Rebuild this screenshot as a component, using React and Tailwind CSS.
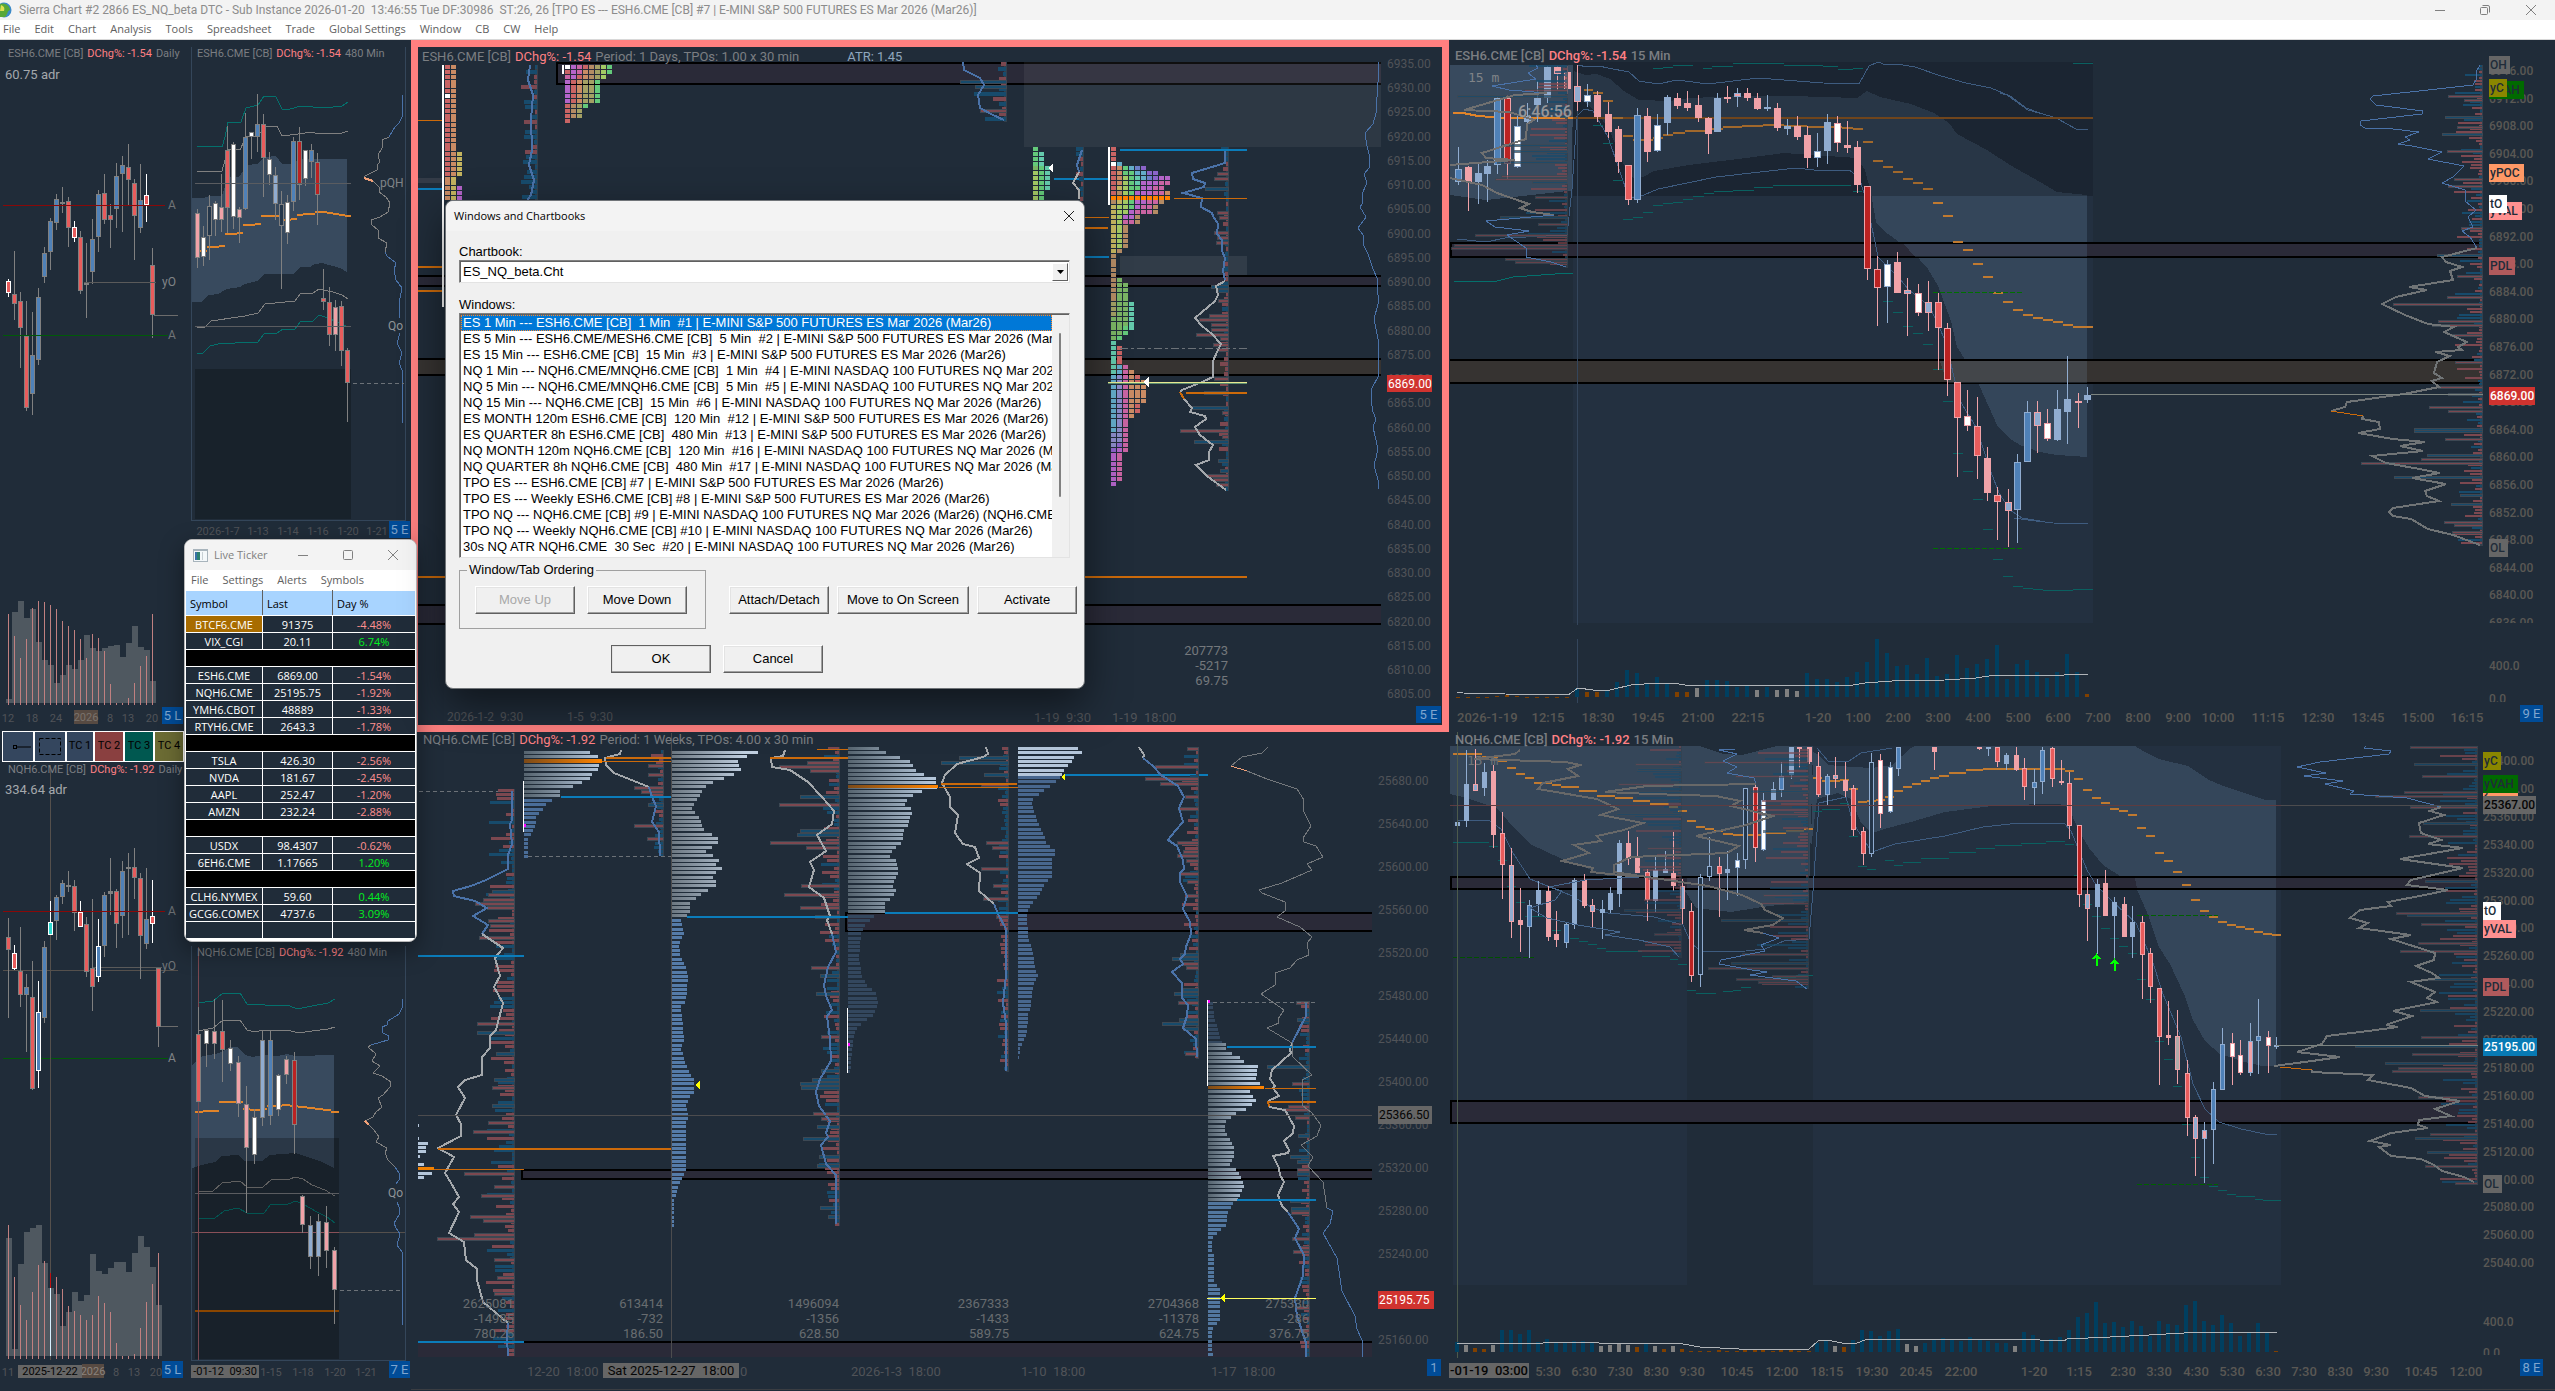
import React, { useState } from "react";

// ---------- helpers ----------

// maps a pane's plot units to screen pixels
const scale = (x0, y0, kx, ky) => (x, y) => [
  Math.round(x0 + x / kx),
  Math.round(y0 + y / ky),
];

const parse = (str) =>
  str
    .trim()
    .split(/\s+/)
    .map((row) => row.split(",").map((v) => (isNaN(v) ? v : Number(v))));

const noise = (i) => {
  const v = Math.sin(i * 12.9898) * 43758.5453;
  return v - Math.floor(v);
};

const GRAY = "#808080";
const DIM = "#505358";
const TEAL = "#04706c";
const BLUE = "#4a72a8";
const LEVEL_BLUE = "#0b7cba";
const ORANGE = "#cc6a0a";

const FILLS = {
  r: "#e85c5c",
  R: "#e85c5c",
  b: "#4f81b8",
  B: "#4f81b8",
  c: "#30d8d0",
  w: "#ffffff",
  y: "#ffffff",
  p: "#f0a2a8",
  z: "#f0a2a8",
  d: "#bb2222",
  l: "#90acd0",
  x: "#90acd0",
  h: "#24364a",
  g: "#808080",
  q: "#b0aaaa",
};

// ---------- chart primitives ----------

function Candles({ s, data, width = 5, paired = false }) {
  const half = (width - 1) / 2;
  return parse(data).map(([x, hi, lo, top, bot, kind], i) => {
    const [cx, yHi] = s(x, hi);
    const yLo = s(x, lo)[1];
    const yTop = s(x, top)[1];
    const yBot = s(x, bot)[1];
    let edge = GRAY;
    if (paired) edge = "rpdxyq".includes(kind) ? "#f0a2a8" : "#90acd0";
    else if ("RBc".includes(kind)) edge = "#ffffff";
    const h = Math.max(yBot - yTop, 2);
    return (
      <g key={i}>
        <rect x={cx} y={yHi} width="1" height={Math.max(yLo - yHi, 1)} fill={edge} />
        <rect x={cx - half} y={yTop} width={width} height={h} fill={edge} />
        {h > 3 && (
          <rect
            x={cx - half + 1}
            y={yTop + 1}
            width={width - 2}
            height={h - 2}
            fill={FILLS[kind]}
          />
        )}
      </g>
    );
  });
}

function Line({ s, pts, color, w = 1 }) {
  const points = parse(pts)
    .map(([x, y]) => s(x, y).join(","))
    .join(" ");
  return <polyline points={points} fill="none" stroke={color} strokeWidth={w} />;
}

function Area({ s, pts, fill, opacity = 1 }) {
  const points = parse(pts)
    .map(([x, y]) => s(x, y).join(","))
    .join(" ");
  return <polygon points={points} fill={fill} opacity={opacity} />;
}

function Dashes({ s, data, color, h = 1 }) {
  return parse(data).map(([x0, y, x1], i) => {
    const [a, py] = s(x0, y);
    const b = s(x1, y)[0];
    return <rect key={i} x={a} y={py} width={b - a} height={h} fill={color} />;
  });
}

function Level({ x0, x1, y, color, h = 1 }) {
  return <rect x={x0} y={y} width={x1 - x0} height={h} fill={color} />;
}

function Dotted({ x0, x1, y, color = "#6c7278", dash = "4 3" }) {
  return (
    <line x1={x0} x2={x1} y1={y} y2={y} stroke={color} strokeDasharray={dash} />
  );
}

function Zone({ x0, x1, y0, y1, fill = "#2a2a38", left = false }) {
  return (
    <g>
      <rect x={x0} y={y0} width={x1 - x0} height={y1 - y0} fill={fill} />
      <rect x={x0} y={y0} width={x1 - x0} height="2" fill="#000" />
      <rect x={x0} y={y1 - 2} width={x1 - x0} height="2" fill="#000" />
      {left && <rect x={x0} y={y0} width="2" height={y1 - y0} fill="#000" />}
    </g>
  );
}

// horizontal delta bars growing left from an edge, with named big bars
function DeltaBars({ s, edge, from, to, step = 4, filler = 16, big = "", opacity = 1, seed = 1 }) {
  const [ex, y0] = s(edge, from);
  const y1 = s(edge, to)[1];
  const small = [];
  for (let y = y0, i = 0; y < y1 - 2; y += step, i++) {
    const n = noise(i + seed * 31);
    small.push(
      <rect
        key={y}
        x={ex - 2 - Math.round(n * n * filler)}
        y={y}
        width={2 + Math.round(n * n * filler)}
        height={step - 1}
        fill={noise(i * 3 + seed) > 0.48 ? "#7c4850" : "#174b6c"}
      />
    );
  }
  return (
    <g opacity={opacity}>
      <rect x={ex - 2} y={y0} width="3" height={y1 - y0} fill="#33404c" />
      {small}
      {big &&
        parse(big).map(([y, x, kind], i) => {
          const [bx, by] = s(x, y);
          return (
            <rect
              key={"b" + i}
              x={bx}
              y={by - 1}
              width={ex - bx}
              height={step > 3 ? 3 : 2}
              fill={kind === "b" ? "#174b6c" : "#7c4850"}
              stroke="#3d4853"
              strokeWidth="1"
            />
          );
        })}
    </g>
  );
}

// TPO rows growing right from an edge; widths come from control points
function ProfileRows({ s, edge, pts, from, to, fill }) {
  const ctl = parse(pts);
  const rows = [];
  const py0 = s(0, from)[1];
  const py1 = s(0, to)[1];
  const ctlPx = ctl.map(([y, x]) => [s(x, y)[1], s(x, y)[0]]);
  const ex = s(edge, 0)[0];
  for (let k = 0; ; k++) {
    const y = py0 + Math.round(k * 4.3);
    if (y >= py1) break;
    let j = 0;
    while (j < ctlPx.length - 2 && ctlPx[j + 1][0] < y) j++;
    const [ya, xa] = ctlPx[j];
    const [yb, xb] = ctlPx[j + 1];
    const t = Math.min(1, Math.max(0, (y - ya) / (yb - ya || 1)));
    rows.push(
      <rect
        key={k}
        x={ex}
        y={y - 1}
        width={Math.max(1, Math.round(xa + (xb - xa) * t) - ex)}
        height="3"
        fill={fill}
      />
    );
  }
  return <g>{rows}</g>;
}

function Label({ x, y, children, color = DIM, size = 12, anchor = "start", weight = 400, font = "Roboto, sans-serif" }) {
  return (
    <text
      x={x}
      y={y}
      fill={color}
      fontSize={size}
      textAnchor={anchor}
      fontWeight={weight}
      fontFamily={font}
      dominantBaseline="central"
      className="whitespace-pre"
    >
      {children}
    </text>
  );
}

function Tag({ x, y, w, h = 18, bg, color = "#202c39", children, weight = 500, size = 12, anchor = "start" }) {
  return (
    <g>
      <rect x={x} y={y} width={w} height={h} fill={bg} />
      <Label
        x={anchor === "middle" ? x + w / 2 : x + 1}
        y={y + h / 2}
        color={color}
        weight={weight}
        size={size}
        anchor={anchor}
      >
        {children}
      </Label>
    </g>
  );
}

function Corner({ x, y, w = 21, children }) {
  return (
    <Tag x={x} y={y} w={w} h={17} bg="#004c98" color="#7fa6cf" weight={400} size={13} anchor="middle">
      {children}
    </Tag>
  );
}

function Chart({ box, children, label }) {
  return (
    <svg
      viewBox={box}
      preserveAspectRatio="none"
      shapeRendering="crispEdges"
      className="block h-full w-full"
      role="img"
      aria-label={label}
    >
      {children}
    </svg>
  );
}

function ChartTitle({ symbol, change, rest, children, className }) {
  return (
    <h2
      className={
        "absolute flex gap-1 whitespace-pre font-['Roboto',sans-serif] leading-3 text-[#7b7e82] " +
        className
      }
    >
      <span>{symbol} [CB]</span>
      <span className="text-[#ff8084]">DChg%: {change}</span>
      <span>{rest}</span>
      {children}
    </h2>
  );
}

// ---------- left column ----------

const ES_DAILY = `25,717,770,724,760,R 43,633,840,763,791,r 61,756,984,784,865,r 79,783,1112,887,1105,r
97,816,1124,946,1063,b 115,744,974,772,961,b 133,621,728,640,712,b 151,534,690,544,637,b
169,462,570,478,550,b 187,441,518,486,491,g 205,471,620,484,563,r 223,543,606,560,595,R
241,573,761,592,754,r 259,609,834,729,731,g 277,537,731,598,697,b 295,450,635,463,592,b
313,402,551,460,539,r 331,492,624,526,541,r 349,369,563,409,508,b 367,348,575,374,403,b
385,312,495,382,421,r 403,417,660,430,529,r 421,372,578,481,563,b 439,402,546,466,496,R
457,624,893,676,826,r`;

const ES_480 = `592,507,684,520,655,p 610,558,678,592,652,w 628,465,660,499,589,h 646,483,587,490,541,w
664,402,575,502,541,p 682,258,579,331,505,r 700,306,567,313,531,w 718,501,609,508,535,p
736,219,510,292,508,b 754,276,357,277,292,w 772,162,336,253,292,b 790,222,470,253,355,r
808,336,434,358,406,w 826,380,540,406,493,l 844,453,746,493,559,h 862,466,612,487,580,w
880,290,513,304,487,b 898,261,480,304,436,d 916,330,437,331,418,w 934,312,414,331,367,b
952,339,555,367,466,d 970,687,810,775,787,r 988,741,918,787,886,r 1006,780,933,802,886,p
1024,783,978,799,934,r 1042,924,1146,931,1030,r`;

const NQ_DAILY = `25,-36,264,21,59,r 43,45,120,68,118,R 61,-9,231,122,196,r 79,132,366,172,196,b
97,93,480,202,476,r 115,153,474,247,422,B 133,33,279,52,264,b 151,-87,15,-23,14,c
169,-105,30,-99,-28,b 187,-150,-78,-141,-99,b 205,-177,-114,-134,-130,g 223,-150,3,-132,-52,r
241,-87,-9,-53,-10,R 259,-39,140,-18,125,r 277,-93,243,114,170,r 295,-33,156,48,142,B
313,-114,80,-105,47,b 331,-216,-45,-117,-109,g 349,-123,54,-116,-18,r 367,-207,24,-177,-42,b
385,-231,15,-189,-186,g 403,-246,-93,-189,-157,r 421,-171,147,-156,17,r 439,-186,57,-33,41,b
457,-150,39,-42,-18,R 475,114,351,115,290,r`;

const NQ_480 = `595,232,516,313,516,r 619,298,411,300,341,w 643,207,387,304,341,p 667,210,457,304,359,r
691,330,423,355,401,w 715,378,561,397,521,p 739,468,849,523,653,p 763,537,702,562,674,w
787,302,588,331,563,l 811,301,585,331,557,b 835,432,558,436,541,w 859,378,462,388,436,p
883,366,672,391,584,d 907,795,908,798,886,p 931,858,1017,886,982,l 955,852,1038,874,982,l
979,828,1014,877,964,p 1003,951,1182,961,1081,p`;

const ES_VOL = [507, 246, 213, 264, 237, 336, 390, 405, 459, 435, 405, 416, 390, 315, 354, 363, 354, 348, 345, 381, 339, 288, 350, 360, 453];
const ES_VOL_PREV = [252, 318, 384, 327, 234, 213, 216, 225, 237, 273, 288, 300, 327, 384, 312, 324, 363, 462, 519, 519, 504, 459, 408, 378, 252];
const NQ_VOL = [924, 1257, 1002, 906, 894, 885, 999, 1074, 1092, 1188, 1146, 1086, 1113, 1095, 972, 1023, 1032, 1014, 996, 996, 1026, 969, 918, 951, 1011, 1125];
const NQ_VOL_PREV = [885, 1041, 1125, 1170, 1086, 1005, 993, 1074, 1041, 1077, 1128, 1143, 1155, 1170, 1155, 1098, 1119, 1146, 1239, 1278, 1278, 1272, 1194, 1116, 1062, 969];

function DailyVolume({ y0, tops, lines, base, lineBase }) {
  return (
    <g>
      {tops.map((t, i) => (
        <rect key={i} x={6 + i * 6} y={Math.round(y0 + t / 3)} width="6" height={Math.round((base - t) / 3)} fill="#4f5860" />
      ))}
      {lines.map((t, i) => (
        <rect key={"l" + i} x={8 + i * 6} y={Math.round(y0 + t / 3)} width="1" height={Math.round((lineBase - t) / 3)} fill="#c08080" />
      ))}
    </g>
  );
}

function EsDaily() {
  const s = scale(0, 40, 3, 3);
  return (
    <section className="relative min-h-0 min-w-0">
      <Chart box="0 40 191 691" label="ES daily">
        <Candles s={s} data={ES_DAILY} />
        <Level x0={3} x1={165} y={205} color="#8a0808" />
        <Level x0={3} x1={168} y={335} color="#005a08" />
        <Level x0={84} x1={156} y={282} color="#5a5a5a" />
        <Level x0={154} x1={178} y={315} color="#6c6c6c" />
        <Label x={168} y={205} color="#707478">A</Label>
        <Label x={168} y={335} color="#707478">A</Label>
        <Label x={162} y={282} color="#808488">yO</Label>
        <DailyVolume y0={530} tops={ES_VOL} lines={ES_VOL_PREV} base={519} lineBase={524} />
        {[["12", 8], ["18", 32], ["24", 56], ["8", 110], ["13", 128], ["20", 152]].map(([t, x]) => (
          <Label key={t} x={x} y={718} anchor="middle" size={11}>{t}</Label>
        ))}
        <Tag x={74} y={710} w={24} h={14} bg="#574a42" color="#7a726c" weight={400} size={11} anchor="middle">2026</Tag>
        <Corner x={162} y={707}>5 L</Corner>
        <Label x={5} y={74} color="#a4a8ac" size={13}>60.75 adr</Label>
      </Chart>
      <ChartTitle symbol="ESH6.CME" change="-1.54" rest="Daily" className="left-2 top-2 text-[11px]" />
    </section>
  );
}

function Es480() {
  const s = scale(0, 40, 3, 3);
  return (
    <section className="relative min-h-0 min-w-0">
      <Chart box="191 40 220 691" label="ES 480 minute">
        <path d="M191.5 47V520.5H405.5V47" fill="none" stroke="#34465a" />
        <Area s={s} fill="#384a5e" pts="576,473 610,473 630,467 665,467 680,420 690,411 716,411 735,385 745,375 770,371 795,350 828,348 845,371 875,371 900,357 1041,357 1041,695 1020,684 965,670 945,672 930,680 900,681 880,702 795,703 770,723 735,731 720,742 680,748 655,763 627,765 603,785 576,785" />
        <rect x="195" y="369" width="156" height="150" fill="#18222b" />
        <Line s={s} color={TEAL} pts="592,319 665,322 675,290 685,246 722,246 738,203 775,195 793,169 828,170 847,208 870,208 903,198 975,203 1025,198 1043,187" />
        <Line s={s} color={GRAY} pts="592,397 665,394 675,360 688,328 720,331 738,290 775,287 795,259 830,259 847,289 895,283 940,277 950,281 1025,279 1043,274" />
        <Line s={s} color={GRAY} pts="592,865 615,860 632,842 735,827 775,818 795,793 885,782 900,763 940,760 958,748 1000,757 1025,765 1043,778" />
        <Line s={s} color={TEAL} pts="592,943 610,938 630,917 665,910 690,913 720,907 775,907 793,883 830,878 850,868 885,868 900,845 940,842 958,824 985,835 1010,845 1043,862" />
        <Dashes s={s} h={2} color="#e0842a" data="598,630,621 621,618,657 657,615,675 675,579,711 711,575,729 729,553,747 747,551,765 765,548,783 783,524,837 846,537,873 873,534,891 891,521,909 909,518,945 945,513,981 981,515,999 999,518,1017 1017,521,1035 1035,524,1053" />
        <Candles s={s} data={ES_480} />
        <Level x0={195} x1={351} y={183} color="#5a5c60" />
        <Level x0={195} x1={351} y={326} color="#5a5c60" />
        <Line s={s} color={BLUE} pts="1205,165 1205,230 1197,250 1185,260 1168,290" />
        <Line s={s} color={GRAY} pts="1168,290 1145,300 1147,325 1135,345 1140,365 1130,375 1132,390 1095,408 1092,413" />
        <Line s={s} color="#f0a078" w={2} pts="1092,413 1118,424" />
        <Line s={s} color={GRAY} pts="1118,424 1140,445 1138,455 1158,470 1170,490 1165,515 1140,530 1112,540 1117,555 1135,570 1133,595 1160,608 1155,635" />
        <Line s={s} color={BLUE} pts="1155,635 1160,648 1188,670 1183,690 1187,720 1205,745 1198,790 1200,835" />
        <Line s={s} color={BLUE} pts="1200,880 1190,910 1205,940 1197,970 1205,990 1205,1150" />
        <Dotted x0={353} x1={404} y={383.5} />
        <Label x={380} y={183} color="#808488">pQH</Label>
        <Label x={388} y={326} color="#909498">Qo</Label>
        {[["2026-1-7", 218], ["1-13", 258], ["1-14", 288], ["1-16", 318], ["1-20", 348], ["1-21", 377]].map(([t, x]) => (
          <Label key={t} x={x} y={531} anchor="middle" size={11}>{t}</Label>
        ))}
        <Corner x={389} y={521}>5 E</Corner>
      </Chart>
      <ChartTitle symbol="ESH6.CME" change="-1.54" rest="480 Min" className="left-1.5 top-2 text-[11px]" />
    </section>
  );
}

function NqDaily() {
  const s = scale(0, 930, 3, 3);
  return (
    <section className="relative min-h-0 min-w-0">
      <Chart box="0 762 191 629" label="NQ daily">
        <Level x0={3} x1={178} y={970} color="#55504c" />
        <Level x0={92} x1={162} y={967} color="#5a5a5a" />
        <Level x0={3} x1={168} y={1058} color="#005a08" />
        <Level x0={160} x1={178} y={1026} color="#6c6c6c" />
        <DailyVolume y0={930} tops={NQ_VOL} lines={NQ_VOL_PREV} base={1277} lineBase={1287} />
        <rect x="50" y="765" width="1" height="595" fill="#55504c" />
        <rect x="50" y="1273" width="1" height="15" fill="#c01010" />
        <rect x="50" y="1288" width="1" height="68" fill="#d8f0ff" />
        <Candles s={s} data={NQ_DAILY} />
        <Level x0={3} x1={165} y={911} color="#8a0808" />
        <Label x={168} y={911} color="#707478">A</Label>
        <Label x={168} y={1058} color="#808488">A</Label>
        <Label x={162} y={966} color="#707478">yO</Label>
        <Label x={8} y={1372} anchor="middle" size={11}>11</Label>
        <Label x={116} y={1372} anchor="middle" size={11}>8</Label>
        <Label x={134} y={1372} anchor="middle" size={11}>13</Label>
        <Label x={156} y={1372} anchor="middle" size={11}>20</Label>
        <Tag x={82} y={1364} w={22} h={14} bg="#574a42" color="#8a827c" weight={400} size={11} anchor="middle">2026</Tag>
        <Tag x={18} y={1365} w={64} h={13} bg="#666666" color="#050505" weight={400} size={11} anchor="middle">2025-12-22</Tag>
        <Corner x={162} y={1361}>5 L</Corner>
        <Label x={5} y={789} color="#a4a8ac" size={13}>334.64 adr</Label>
      </Chart>
      <ChartTitle symbol="NQH6.CME" change="-1.92" rest="Daily" className="left-2 top-0.5 text-[11px]" />
    </section>
  );
}

function Nq480() {
  const s = scale(0, 930, 3, 3);
  return (
    <section className="relative min-h-0 min-w-0">
      <Chart box="191 762 220 629" label="NQ 480 minute">
        <path d="M191.5 946V1360.5H405.5V946" fill="none" stroke="#34465a" />
        <Area s={s} fill="#384a5e" pts="576,405 590,390 610,379 645,373 665,365 690,352 715,352 735,375 760,381 790,376 830,377 860,372 885,377 1002,375 1002,714 965,697 920,680 885,669 810,676 785,693 735,693 715,674 665,679 645,697 605,704 576,714" />
        <Line s={s} color={TEAL} pts="595,220 640,213 670,190 720,190 740,222 795,226 870,228 890,236 935,228 985,218 1004,208" />
        <Line s={s} color={GRAY} pts="595,303 640,295 670,271 720,271 742,300 765,305 790,301 860,299 885,307 915,307 960,299 985,297 1004,292" />
        <Line s={s} color={GRAY} pts="595,786 640,783 665,760 720,753 742,772 790,770 815,748 870,748 885,742 910,748 935,765 975,780 1004,797" />
        <Line s={s} color={TEAL} pts="595,865 645,865 672,843 715,835 740,850 792,850 812,823 865,823 888,814 910,823 950,845 980,862 1004,880" />
        <rect x="195" y="1138" width="144" height="221" fill="#000" opacity="0.25" />
        <Dashes s={s} h={2} color="#e0842a" data="585,543,609 609,540,657 657,512,729 729,534,750 750,537,780 780,533,800 800,524,845 845,521,870 870,524,895 895,527,920 920,530,945 945,534,970 970,538,993 993,543,1017" />
        <Level x0={195} x1={339} y={1310} color="#8a4600" h={2} />
        <Level x0={195} x1={339} y={1193} color="#5a5c60" />
        <Level x0={192} x1={405} y={1232} color="#55504c" />
        <Level x0={195} x1={339} y={1232} color="#8a5058" />
        <rect x="198" y="947" width="1" height="413" fill="#7a4850" />
        <Candles s={s} data={NQ_480} />
        <Line s={s} color={BLUE} pts="1205,207 1205,235 1197,252 1165,272 1160,285 1145,290 1150,308 1168,318 1165,330 1112,345" />
        <Line s={s} color={GRAY} pts="1112,345 1105,352 1127,372 1117,392 1140,408 1120,428 1145,438 1172,455 1170,472 1150,495 1133,503 1145,530 1127,545 1120,560 1095,573" />
        <Line s={s} color="#f0a078" w={2} pts="1095,573 1106,584" />
        <Line s={s} color={GRAY} pts="1106,584 1122,600 1138,620 1128,636 1160,655 1155,668 1163,690 1185,710" />
        <Line s={s} color={BLUE} pts="1185,710 1198,730 1197,750 1187,763" />
        <Line s={s} color={BLUE} pts="1192,815 1198,830 1198,855 1182,880 1187,895 1200,912 1190,945 1205,965 1205,1185" />
        <Dotted x0={340} x1={403} y={1290.5} />
        <Label x={388} y={1193} color="#909498">Qo</Label>
        {[["1-15", 271], ["1-18", 303], ["1-20", 335], ["1-21", 366]].map(([t, x]) => (
          <Label key={t} x={x} y={1372} anchor="middle" size={11}>{t}</Label>
        ))}
        <Tag x={191} y={1365} w={68} h={13} bg="#666666" color="#050505" weight={400} size={11} anchor="middle">-01-12  09:30</Tag>
        <Corner x={389} y={1361}>7 E</Corner>
      </Chart>
      <ChartTitle symbol="NQH6.CME" change="-1.92" rest="480 Min" className="left-1.5 top-[185px] text-[11px]" />
    </section>
  );
}

function ToolBar() {
  const base = "h-full shrink-0 border border-white font-['Roboto',sans-serif] text-[11px] text-black ";
  return (
    <nav className="flex h-[31px] shrink-0 overflow-hidden pl-[2px]" aria-label="Chart tools">
      <button className={base + "flex w-8 items-center justify-center bg-[#34465e]"} aria-label="Ray">
        <svg width="18" height="6" viewBox="0 0 18 6" className="ml-2" fill="none" stroke="#000">
          <rect x="0.5" y="1.5" width="3" height="3" />
          <path d="M4 3H18" />
        </svg>
      </button>
      <button className={base + "flex w-8 items-center justify-center bg-[#34465e]"} aria-label="Rectangle">
        <svg width="22" height="17" viewBox="0 0 22 17" fill="none" stroke="#000">
          <rect x="0.5" y="0.5" width="21" height="16" strokeDasharray="4 2" />
        </svg>
      </button>
      <button className={base + "w-7 bg-[#34465e]"}>TC 1</button>
      <button className={base + "w-[30px] bg-[#8a4040]"}>TC 2</button>
      <button className={base + "w-[30px] bg-[#005850]"}>TC 3</button>
      <button className={base + "w-[30px] bg-[#6c6c34]"}>TC 4</button>
    </nav>
  );
}

// ---------- centre column ----------

const TPO_COLORS = {
  R: "#c96464",
  O: "#c98b64",
  Y: "#c3b45f",
  L: "#a3c964",
  G: "#64c97a",
  T: "#64c9ac",
  B: "#64acc9",
  I: "#6c7ec9",
  J: "#8b8bc9",
  V: "#8b64c9",
  M: "#b464c9",
  P: "#c964a3",
  W: "#ffffff",
  K: "#ff8000",
  N: "#b48b64",
  D: "#7ab464",
  E: "#a3a064",
};

const TODAY_TPO =
  "R R R WB ROGBIV ROGGBBVV ROLGTBIVMM ROLGTMMMPP RYLGGMMPP RNLGMMMPPO KKKKKKKKKK NYLGMMPPN YLLGMPPN YLLMPPPN YLMMN YLPPN YLN YLN YLN YLN YLN YN N N N N N ND NDD NDD NDD NDD EDDT EDDT EDDT DDDT DDDT DDGT DDG DG T TR TR TR TR TBP TBPO BJPOR BJPORO BJPOOO BJPOOO BJPOOO BJPOOO BJPOR BJPOR BJPO BJP BJP BJP JJP JJP JVP VMP MP MP MP MP MP MP M".split(
    " "
  );

function TpoCells({ x, y, rows, step = 4.85 }) {
  return rows.map((row, r) =>
    row.split("").map((c, i) => (
      <rect
        key={r + "-" + i}
        x={x + i * 6}
        y={Math.round(y + r * step)}
        width="5"
        height="4"
        fill={TPO_COLORS[c]}
      />
    ))
  );
}

const repeatRows = (spec) =>
  spec.split(" ").flatMap((part) => {
    const [row, n] = part.split("*");
    return Array(Number(n || 1)).fill(row);
  });

function EsProfile() {
  const s = scale(1000, 40, 3, 2.272);
  const prices = Array.from({ length: 27 }, (_, i) => 6935 - i * 5);
  return (
    <section className="relative min-h-0 border-[7px] border-[#ff8080]">
      <Chart box="418 47 1024 678" label="ES TPO profile">
        <Zone x0={556} x1={1381} y0={62} y1={85} left />
        <rect x="1024" y="62" width="357" height="85" fill="#fff" opacity="0.06" />
        <rect x="1120" y="256" width="127" height="19" fill="#fff" opacity="0.08" />
        <Zone x0={418} x1={1381} y0={275} y1={287} />
        <Zone x0={418} x1={1381} y0={358} y1={376} fill="#363331" />
        <Zone x0={418} x1={1381} y0={604} y1={625} />
        <Level x0={418} x1={1247} y={576} color={ORANGE} h={2} />
        <Level x0={418} x1={442} y={120} color={ORANGE} />
        <Level x0={418} x1={442} y={188} color={LEVEL_BLUE} h={2} />
        <rect x="418" y="178" width="24" height="5" fill="#343c48" />
        <Level x0={418} x1={442} y={266} color={ORANGE} h={2} />
        <Level x0={418} x1={442} y={290} color={ORANGE} h={2} />

        {/* oldest sessions on the left */}
        <rect x="442" y="65" width="2" height="242" fill="#fff" />
        <TpoCells x={445} y={65} rows={repeatRows("RO*6 WO RO*11 ROY*5 OY*2 OYM*3")} />
        <DeltaBars s={(x, y) => [x, y]} edge={537} from={65} to={204} step={5} filler={16} seed={4} />
        <Line s={(x, y) => [x, y]} color={BLUE} w={2} pts="530,65 528,80 533,95 531,120 532,150 529,165 534,180 531,195 526,202" />
        <rect x="562" y="65" width="2" height="9" fill="#fff" />
        <TpoCells x={565} y={65} rows={repeatRows("WMPRNELG RMPONELG PMRONEL MROEEG*5 RNEG RNE*2 R")} step={4.88} />
        <DeltaBars s={(x, y) => [x, y]} edge={1006} from={62} to={122} step={5} filler={40} seed={9} big="81,960,b 86,975,b 110,980,r" />
        <Line s={(x, y) => [x, y]} color={BLUE} w={2} pts="963,62 964,70 980,78 984,85 978,95 980,108 993,115 1004,120" />

        <TpoCells x={1033} y={147} rows={repeatRows("G GT*3 DGT LGT*4 LG*3")} />
        <polygon points="1048,168 1053,163 1053,173" fill="#fff" />
        <Level x0={1054} x1={1108} y={178} color={LEVEL_BLUE} h={2} />
        <DeltaBars s={s} edge={250} from={243} to={365} step={5} filler={6} seed={5} />
        <Line s={s} color={BLUE} w={2} pts="245,250 232,285 238,300" />
        <Line s={s} color="#b0b0b0" w={2} pts="238,300 220,325 238,340 238,362" />
        <Level x0={1054} x1={1109} y={217} color={ORANGE} />
        <Level x0={1054} x1={1108} y={227} color={ORANGE} h={2} />
        <Level x0={1054} x1={1109} y={256} color={LEVEL_BLUE} h={2} />

        {/* current session */}
        <rect x="1108" y="147" width="2" height="58" fill="#fff" />
        <TpoCells x={1111} y={147} rows={TODAY_TPO} />
        <DeltaBars s={s} edge={683} from={243} to={1024} step={5} filler={7} seed={2}
          big="303,650,r 314,643,r 337,615,b 391,652,r 403,656,r 436,643,r 447,650,r 458,648,r 558,632,b 568,655,b 590,655,r 624,628,r 635,597,r 645,634,r 656,632,r 667,587,r 678,660,r 690,640,r 702,655,r 767,643,r 800,613,r 833,573,b 845,665,r 887,541,r 899,665,r 910,583,b 955,655,b 977,661,b 988,622,r 998,640,r 1008,648,r" />
        <Line s={s} color={BLUE} w={2} pts="675,250 675,280 575,303 580,315 615,325 612,335 550,348 605,360 602,380 635,392 640,400 655,418 650,440 665,455 665,480 675,495 668,525 675,545" />
        <Line s={s} color="#a4a8ac" w={2} pts="675,548 648,558 655,580 645,592 585,632 605,650 635,668 662,690 655,705 640,730 638,765 605,778 545,795 541,800" />
        <Line s={s} color={ORANGE} w={2} pts="541,800 552,815" />
        <Line s={s} color="#a4a8ac" w={2} pts="552,815 575,835 570,845 615,855 618,862 585,880 600,898 638,920 628,935 628,955 587,965 620,990 677,1022" />
        <Level x0={1120} x1={1247} y={149} color={LEVEL_BLUE} h={2} />
        <Level x0={1174} x1={1247} y={198} color={ORANGE} />
        <Dotted x0={1120} x1={1247} y={348.5} dash="8 3 3 3" />
        <Level x0={1108} x1={1247} y={382} color="#e8e890" />
        <Level x0={1108} x1={1247} y={383} color="#5f8f70" />
        <Level x0={1186} x1={1247} y={392} color={ORANGE} h={2} />
        <polygon points="1143,382 1149,377 1149,387" fill="#fff" />
        <Line s={s} color={BLUE} pts="1135,50 1135,95 1130,105 1130,130 1127,165 1118,190 1095,212 1100,240 1110,268 1108,290 1092,305 1100,325 1086,350 1090,370 1079,380 1098,403 1075,427 1090,442 1090,463 1105,487 1120,520 1135,545 1130,560 1135,580 1133,600 1122,635 1135,680 1135,765 1115,790 1113,815 1120,845 1128,860 1120,880 1135,930 1128,950 1122,965 1135,1000 1135,1020" />

        {["207773", "-5217", "69.75"].map((t, i) => (
          <Label key={t} x={1228} y={650 + i * 15} anchor="end" color="#74787c" size={13}>{t}</Label>
        ))}
        {prices.map((p, i) => (
          <Label key={p} x={1387} y={Math.round(64 + i * 24.24)}>{p.toFixed(2)}</Label>
        ))}
        <Tag x={1387} y={375} w={45} h={17} bg="#d0332f" color="#ffffff" weight={400}>6869.00</Tag>
        <Label x={447} y={717}>2026-1-2  9:30</Label>
        <Label x={567} y={717}>1-5  9:30</Label>
        <Label x={1034} y={717} size={13}>1-19  9:30</Label>
        <Label x={1112} y={717} size={13}>1-19  18:00</Label>
        <Corner x={1416} y={706} w={25}>5 E</Corner>
      </Chart>
      <ChartTitle symbol="ESH6.CME" change="-1.54" rest="Period: 1 Days, TPOs: 1.00 x 30 min" className="left-1 top-1 text-[13px]">
        <span className="pl-11 text-[#8fa6bd]">ATR: 1.45</span>
      </ChartTitle>
    </section>
  );
}

const SUMS = [
  [514, "2625081", "-14985", "780.25"],
  [663, "613414", "-732", "186.50"],
  [839, "1496094", "-1356", "628.50"],
  [1009, "2367333", "-1433", "589.75"],
  [1199, "2704368", "-11378", "624.75"],
  [1309, "275330", "-286", "376.75"],
];

function NqProfile() {
  const s = scale(410, 690, 2.45, 2.237);
  const t = scale(1040, 690, 3, 2.237);
  const gray = "#a4a8ac";
  return (
    <section className="relative min-h-0">
      <Chart box="411 732 1038 659" label="NQ TPO profile">
        <defs>
          <linearGradient id="fadeA" gradientUnits="userSpaceOnUse" x1="524" x2="600" y1="0" y2="0">
            <stop offset="0" stopColor="#56646f" />
            <stop offset="1" stopColor="#b4c6da" />
          </linearGradient>
          <linearGradient id="fadeB" gradientUnits="userSpaceOnUse" x1="672" x2="745" y1="0" y2="0">
            <stop offset="0" stopColor="#6d7882" />
            <stop offset="1" stopColor="#c0cfe0" />
          </linearGradient>
          <linearGradient id="fadeC" gradientUnits="userSpaceOnUse" x1="848" x2="930" y1="0" y2="0">
            <stop offset="0" stopColor="#56646f" />
            <stop offset="1" stopColor="#b4c6da" />
          </linearGradient>
          <linearGradient id="fadeD" gradientUnits="userSpaceOnUse" x1="1208" x2="1250" y1="0" y2="0">
            <stop offset="0" stopColor="#56646f" />
            <stop offset="1" stopColor="#b4c6da" />
          </linearGradient>
          <linearGradient id="fadePoc" x1="0" x2="1" y1="0" y2="0">
            <stop offset="0" stopColor="#7c4a18" />
            <stop offset="1" stopColor="#ff8400" />
          </linearGradient>
        </defs>
        <Zone x0={845} x1={1372} y0={912} y1={932} left />
        <Zone x0={521} x1={1372} y0={1169} y1={1180} left />
        <rect x="418" y="1341" width="954" height="16" fill="#2a2a38" />
        <Level x0={418} x1={1372} y={1341} color="#000" h={2} />

        {/* first week, cut off by the pane edge */}
        <Dotted x0={419} x1={512} y={791.5} />
        <DeltaBars s={s} edge={256} from={222} to={1490} filler={26} seed={3}
          big="450,200,b 457,190,r 467,178,r 477,160,r 486,188,r 515,190,r 525,195,r 553,170,r 745,165,r 765,163,b 811,210,b 870,205,b 888,200,r 928,200,b 967,190,r 986,155,r 1081,133,r 1110,205,r 1129,175,r 1177,146,r 1186,180,r 1216,158,r 1225,66,r 1273,205,r 1313,213,r 1350,205,r" />
        <Line s={s} color={BLUE} w={2} pts="249,227 249,290 245,300 250,345 240,370 240,400 185,425 150,438 105,450 108,460 160,472 188,487 155,505 190,525 177,545" />
        <Line s={s} color={gray} w={2} pts="177,545 228,578 208,600 220,640 205,665 228,700 210,760 195,775 195,800 177,820 177,862 135,872 118,888 135,912 112,950 125,970 125,997 68,1025 108,1045 85,1080 100,1102 120,1135 105,1150 120,1168 95,1215 132,1235 138,1275 165,1295 163,1320 180,1370 240,1415" />
        <Line s={s} color={BLUE} w={2} pts="240,1415 237,1450 240,1490" />
        <Level x0={418} x1={524} y={955} color={LEVEL_BLUE} h={2} />
        <Level x0={438} x1={671} y={1148} color={ORANGE} h={2} />
        <Level x0={434} x1={524} y={1169} color={ORANGE} />
        <Level x0={418} x1={524} y={1341} color={LEVEL_BLUE} h={2} />
        {[[1124, 1], [1137, 1], [1142, 10], [1146, 8], [1150, 8], [1155, 2], [1163, 6], [1172, 14], [1176, 6]].map(([y, w]) => (
          <rect key={y} x="418" y={y} width={w} height="3" fill="#b4c6da" />
        ))}
        <rect x="418" y="1167" width="16" height="3" fill="#f08000" />

        {/* 12-20 */}
        <ProfileRows s={s} edge={279} from={139} to={240} fill="url(#fadeA)" pts="139,441 149,465 168,462 178,461 187,446 197,441 207,416 216,392 226,367 240,367" />
        <ProfileRows s={s} edge={279} from={245} to={373} fill="#4a6d98" pts="245,348 254,333 264,328 274,318 283,309 293,309 312,304 331,289 375,289" />
        <rect x="524" y="759" width="78" height="4" fill="url(#fadePoc)" />
        <rect x="523" y="781" width="1" height="51" fill="#fff" />
        <rect x="524" y="824" width="2" height="3" fill="#f0f" />
        <DeltaBars s={s} edge={619} from={135} to={373} filler={14} seed={7} big="168,583,r 187,583,r 216,550,r 226,565,r 255,582,b 303,550,r 332,580,r" />
        <Line s={s} color={gray} w={2} pts="517,135 515,143 478,152 480,168 500,185 585,217" />
        <Line s={s} color={BLUE} w={2} pts="585,217 592,240 603,260 592,295 610,318 613,372" />
        <Level x0={606} x1={671} y={757} color={ORANGE} h={2} />
        <Level x0={602} x1={671} y={761} color={ORANGE} />
        <Level x0={561} x1={672} y={796} color={LEVEL_BLUE} h={2} />
        <Dotted x0={528} x1={671} y={856.5} />

        {/* 12-27 */}
        <ProfileRows s={s} edge={642} from={139} to={512} fill="url(#fadeB)" pts="139,852 149,818 158,804 168,805 178,812 187,794 197,769 207,735 216,720 235,711 245,701 264,691 283,709 303,715 312,720 322,740 331,754 341,755 351,740 360,725 379,759 389,750 399,764 408,750 418,742 428,750 437,750 447,730 457,713 466,701 476,687 495,686 505,677" />
        <ProfileRows s={s} edge={642} from={514} to={1200} fill="#557ba8" pts="514,665 543,672 570,660 600,665 620,675 645,680 695,675 705,665 785,672 800,665 850,680 870,695 900,696 909,687 928,677 955,680 965,675 1075,676 1095,665 1115,657 1140,647 1200,647" />
        <polygon points="695,1085 700,1080 700,1090" fill="#ff0" />
        <DeltaBars s={s} edge={1050} from={127} to={1198} filler={18} seed={11}
          big="160,973,r 170,905,r 178,980,r 237,955,b 255,903,r 313,955,b 322,947,b 341,882,r 351,970,r 437,957,r 457,917,r 486,955,r 505,993,r 620,983,r 637,1005,b 677,995,b 773,1008,r 850,1008,b 870,985,b 880,955,b 887,957,b 947,987,r 957,1008,r 975,997,b 1003,962,b 1042,1003,b 1062,997,b 1157,1005,b 1177,1025,b" />
        <Line s={s} color={gray} w={2} pts="918,135 915,148 885,152 888,172 930,180 975,205 1010,240 1038,270 1035,300 997,325 1020,360 980,385 990,402 978,440 1015,465 1028,505 1022,515 1035,545" />
        <Line s={s} color={BLUE} w={2} pts="1035,545 1043,585 1025,620 1015,660 1018,685 1033,715 1022,730 1030,780 1032,830 1005,870 995,900 1002,930 1030,965 1020,990 1023,1000 1007,1018 1020,1060 1043,1085 1043,1195" />
        <Level x0={770} x1={848} y={757} color={ORANGE} h={2} />
        <Level x0={817} x1={848} y={749} color={ORANGE} />
        <Level x0={687} x1={848} y={916} color={LEVEL_BLUE} h={2} />

        {/* 2026-1-3 */}
        <ProfileRows s={s} edge={1073} from={130} to={500} fill="url(#fadeC)" pts="130,1150 139,1165 149,1200 158,1225 178,1240 187,1260 197,1289 216,1290 226,1254 235,1233 245,1217 254,1213 264,1227 274,1229 303,1219 312,1210 341,1205 351,1190 370,1170 379,1190 408,1199 437,1182 447,1190 466,1178 476,1163 500,1163" />
        <ProfileRows s={s} edge={1073} from={505} to={857} fill="#33475e" pts="505,1137 524,1118 543,1105 600,1100 640,1107 658,1117 668,1132 678,1142 698,1147 725,1137 735,1120 755,1095 770,1088 810,1083 857,1078" />
        <rect x="848" y="785" width="90" height="3" fill="url(#fadePoc)" />
        <rect x="847" y="1008" width="1" height="65" fill="#fff" />
        <rect x="848" y="1043" width="2" height="3" fill="#f0f" />
        <DeltaBars s={s} edge={1466} from={127} to={855} filler={10} seed={13}
          big="150,1345,b 160,1300,b 187,1407,b 210,1400,r 341,1410,r 351,1425,r 399,1400,r 437,1428,r 466,1405,r 505,1435,r" />
        <Line s={s} color={gray} w={2} pts="1412,127 1415,143 1405,150 1340,165 1310,190 1303,208 1322,240 1323,262 1343,280 1335,320 1355,345 1385,352 1395,375 1365,390 1397,410 1393,450 1430,478" />
        <Line s={s} color={BLUE} w={2} pts="1430,478 1440,500 1460,535 1460,640 1452,700 1460,745 1460,853" />
        <Level x0={941} x1={1017} y={783} color={ORANGE} h={2} />
        <Level x0={939} x1={1018} y={787} color={ORANGE} />
        <Level x0={885} x1={1018} y={912} color={LEVEL_BLUE} h={2} />

        {/* 1-10 */}
        <ProfileRows s={t} edge={-66} from={130} to={190} fill="url(#fadeC)" pts="130,115 139,126 149,102 158,96 168,84 178,72 190,65" />
        <ProfileRows s={t} edge={-66} from={194} to={826} fill="#48678e" pts="194,60 207,42 216,24 226,5 245,-25 264,-22 303,-4 322,12 341,18 360,48 379,36 418,36 428,18 447,5 466,-12 495,-40 550,-35 580,-25 620,-15 640,-6 660,-20 700,-27 730,-37 765,-38 780,-48 800,-60 826,-62" />
        <polygon points="1061,777 1065,773 1065,781" fill="#ff0" />
        <Level x0={1065} x1={1208} y={774} color={LEVEL_BLUE} h={2} />
        <DeltaBars s={t} edge={475} from={127} to={826} filler={14} seed={17}
          big="130,442,r 170,344,r 197,316,r 207,360,r 237,435,r 265,415,r 341,410,r 360,428,r 370,410,r 380,438,r 409,420,r 428,440,r 458,440,r 590,420,b 600,396,b 610,430,r 620,437,r 668,430,b 677,402,b 697,415,r 735,418,b 744,366,b 755,430,b 812,436,r" />
        <Line s={t} color={gray} w={2} pts="298,128 312,145 308,152" />
        <Line s={t} color={BLUE} w={2} pts="308,152 340,170 362,190 415,215 432,240 418,265 428,295 405,315 385,335 410,350 430,380 432,400 420,410 420,430 440,460 428,490 450,520 452,545 437,575 435,590 420,602 428,612 395,630 425,655 425,690 443,705 440,730 428,755 468,780 470,822" />

        {/* 1-17 */}
        <ProfileRows s={t} edge={504} from={700} to={790} fill="#33475e" pts="700,520 735,522 754,534 773,540 790,546" />
        <ProfileRows s={t} edge={504} from={792} to={1145} fill="url(#fadeD)" pts="792,558 802,558 812,575 821,600 831,612 841,654 870,648 880,660 898,630 917,648 936,625 946,588 965,558 985,555 1005,570 1024,582 1043,582 1062,570 1072,588 1091,606 1110,612 1130,600 1145,588" />
        <ProfileRows s={t} edge={504} from={1148} to={1492} fill="#52779f" pts="1148,580 1168,564 1197,558 1207,540 1226,516 1250,516 1264,521 1322,522 1340,540 1410,540 1430,516 1480,516 1492,522" />
        <rect x="1208" y="1086" width="56" height="3" fill="url(#fadePoc)" />
        <rect x="1207" y="1000" width="1" height="86" fill="#fff" />
        <rect x="1208" y="1000" width="2" height="3" fill="#f0f" />
        <DeltaBars s={t} edge={806} from={695} to={1492} filler={9} seed={19}
          big="697,768,r 735,770,b 841,681,b 880,757,r 930,745,r 937,730,r 956,765,r 995,775,b 1043,750,b 1053,770,b 1072,770,r 1081,770,b 1140,750,b 1158,753,b 1168,753,r 1225,757,r 1245,780,r 1255,760,r 1380,765,r" />
        <Line s={t} color={BLUE} w={2} pts="798,700 798,730 757,790" />
        <Line s={t} color={gray} w={2} pts="757,790 750,805 753,812 697,850 690,870 705,885 700,890 718,908 683,920" />
        <Line s={t} color={ORANGE} w={2} pts="683,920 686,932" />
        <Line s={t} color={gray} w={2} pts="686,932 735,940 762,975 758,990 732,1010 748,1028 745,1035 700,1042 718,1070 720,1085 733,1100 715,1130 725,1155 745,1168" />
        <Line s={t} color={BLUE} w={2} pts="745,1168 777,1205 765,1225 793,1265 790,1310 765,1360 770,1400 798,1460 798,1492" />
        <Dotted x0={1213} x1={1316} y={1002.5} />
        <Level x0={1227} x1={1316} y={1046} color={LEVEL_BLUE} h={2} />
        <Level x0={1265} x1={1316} y={1088} color={ORANGE} />
        <Level x0={1268} x1={1316} y={1101} color={ORANGE} h={2} />
        <Level x0={1237} x1={1316} y={1199} color={LEVEL_BLUE} h={2} />
        <Level x0={1207} x1={1316} y={1298} color="#ffff60" />
        <polygon points="1220,1298 1225,1293 1225,1303" fill="#ff0" />

        {/* composite profile */}
        <Line s={t} color="#74787c" pts="683,127 665,142 605,150 573,170" />
        <Line s={t} color="#f0a078" pts="573,170 620,182" />
        <Line s={t} color="#74787c" pts="620,182 680,200 770,222 793,245 790,268 813,305 790,330 793,340 828,350 850,373 800,390 815,402 725,432 658,448 665,455 735,475 737,492 712,508 780,530 815,552 800,565 808,593 770,605 750,622 705,632 705,660 663,680 733,715 715,735 718,745 680,757 757,790 760,820 815,862 785,872 790,930 812,945 842,972 830,998 782,1018 818,1045 805,1065 848,1100 862,1158" />
        <Line s={t} color={BLUE} pts="862,1158 880,1165 870,1195 848,1215 890,1270 905,1345 945,1400 950,1430 967,1455 965,1492" />

        <rect x="671" y="733" width="1" height="625" fill="#4c4c4e" />
        <Level x0={418} x1={1372} y={1115} color="#4c4c4e" />

        {SUMS.map(([x, ...vals]) =>
          vals.map((v, i) => (
            <Label key={v} x={x} y={1303 + i * 15} anchor="end" color="#686c70" size={13}>{v}</Label>
          ))
        )}
        {[25680, 25640, 25600, 25560, 25520, 25480, 25440, 25400, 25360, 25320, 25280, 25240, 0, 25160].map(
          (p, i) => p > 0 && <Label key={p} x={1378} y={781 + i * 43} size={12}>{p.toFixed(2)}</Label>
        )}
        <Tag x={1378} y={1106} w={54} h={18} bg="#666666" color="#050505" weight={400}>25366.50</Tag>
        <Tag x={1378} y={1291} w={56} h={18} bg="#d0332f" color="#ffffff" weight={400}>25195.75</Tag>
        <Label x={527} y={1371} size={13}>12-20  18:00</Label>
        <Label x={740} y={1371} size={13}>0</Label>
        <Tag x={603} y={1363} w={136} h={15} bg="#666666" color="#050505" weight={400} size={13} anchor="middle">Sat 2025-12-27  18:00</Tag>
        <Label x={851} y={1371} size={13}>2026-1-3  18:00</Label>
        <Label x={1021} y={1371} size={13}>1-10  18:00</Label>
        <Label x={1211} y={1371} size={13}>1-17  18:00</Label>
        <Corner x={1427} y={1359} w={14}>1</Corner>
        <Level x0={411} x1={1449} y={1389} color="#3a3d42" />
      </Chart>
      <ChartTitle symbol="NQH6.CME" change="-1.92" rest="Period: 1 Weeks, TPOs: 4.00 x 30 min" className="left-3 top-0.5 text-[13px]" />
    </section>
  );
}

// ---------- right column ----------

function Volume({ s, data, base }) {
  const colors = { b: "#003f60", o: "#804000", g: "#808080" };
  return parse(data).map(([x, top, kind = "b"], i) => {
    const [cx, y] = s(x, top);
    const yb = s(x, base)[1];
    return <rect key={i} x={cx - 2} y={y} width="4" height={Math.max(yb - y, 1)} fill={colors[kind]} />;
  });
}

const ES15_A = `46,311,391,359,385,b 72,352,448,354,386,p 98,345,432,367,385,l 124,339,428,352,368,l
150,206,369,207,349,b 176,202,379,207,348,d 202,242,356,268,353,w 228,218,262,245,258,l
254,172,258,208,222,l 280,140,218,143,208,l 307,140,190,143,157,p 333,140,200,153,188,p
359,138,236,183,217,x 385,178,226,202,217,w 411,192,258,201,247,p 438,216,292,242,279,p
464,266,366,273,344,p 490,349,434,349,423,r 516,228,431,243,423,b 542,228,343,246,323,p
568,242,322,264,319,w 594,202,286,206,260,l 620,197,230,208,224,p 646,192,236,218,228,p
673,202,258,222,250,p 699,248,327,249,283,p 725,197,280,208,279,l 751,182,218,206,208,p
777,187,226,197,206,z 803,187,214,197,207,p 829,197,233,208,232,p 855,202,236,227,229,l
881,218,278,228,272,p 907,252,286,267,274,l 934,246,296,267,290,p 960,267,357,286,334,p
986,282,353,319,334,w 1012,242,348,259,319,l 1038,246,322,260,304,y 1064,256,325,307,313,p
1090,298,408,311,393,p 1117,395,593,395,569,d 1143,542,690,571,611,d 1169,550,684,560,609,w
1195,534,620,556,620,p 1221,590,713,615,624,x 1248,601,669,620,664,y 1274,596,702,639,664,x
1300,620,785,639,695,r 1326,684,840,695,806,d 1352,809,1010,810,886,r 1378,826,914,882,902,y
1404,842,1016,902,967,r 1430,947,1061,970,1044,p 1456,1033,1145,1048,1063,r 1483,1036,1160,1063,1082,x
1509,963,1150,978,1081,b 1535,850,980,872,978,b 1561,850,960,872,902,x`;
const ES15_B = `134,866,934,897,931,y 162,826,934,867,932,l 190,754,940,846,872,l 219,832,906,850,852,y 247,821,853,837,847,l`;

const NQ15_A = `45,157,262,238,247,l 69,70,251,150,235,l 92,68,165,150,165,x 116,100,178,122,160,l
139,105,299,119,268,p 163,215,418,264,338,r 186,300,509,340,473,x 210,393,542,467,480,p
233,421,556,433,483,b 257,376,458,398,430,l 281,388,516,400,506,p 304,446,530,500,515,p
328,472,532,477,520,b 351,370,488,374,478,l 375,360,439,373,434,p 398,418,484,432,448,x
422,421,512,442,450,l 445,390,450,404,444,l 469,280,437,287,406,l 492,259,338,287,324,p
516,273,357,322,357,p 540,348,470,355,420,r 563,318,448,351,422,l 587,306,357,348,357,l
610,262,400,358,389,p 633,371,477,387,441,x 657,428,612,447,598,d 680,360,624,366,595,h
704,273,376,342,366,h 728,320,460,342,359,r 751,306,420,348,357,l 775,311,411,328,347,w
798,159,348,160,328,h 822,146,333,157,300,d 845,171,306,186,303,w 869,146,187,162,186,l
892,97,181,131,163,b 916,62,139,63,128,l 939,62,112,62,66,p 963,62,103,63,98,p
987,75,180,108,175,r 1010,126,199,131,175,b 1033,86,159,129,139,x 1057,97,180,140,165,p
1080,153,271,160,256,r 1104,250,339,260,312,r 1127,77,321,97,312,h 1151,79,252,94,219,y
1175,97,217,110,215,w 1198,62,131,62,114,b 1292,62,118,62,75,p 1409,62,71,62,66,p
1433,62,85,62,67,l 1456,62,110,62,97,r 1480,77,118,82,102,l 1504,62,119,82,117,p
1527,88,188,112,156,r 1551,115,199,146,158,b`;
const NQ15_B = `120,62,173,71,144,b 146,62,157,66,139,r 171,93,151,143,146,p 196,122,278,148,247,r
222,246,437,246,410,d 247,367,516,407,441,x 273,372,547,383,438,l 298,350,458,381,458,p
323,414,558,425,459,l 349,414,507,430,507,p 374,434,556,471,508,l 400,457,652,471,550,r
425,534,661,545,623,r 450,626,853,627,740,r 476,657,759,737,742,y 501,678,851,738,819,q
527,795,972,824,929,r 552,924,1066,928,980,x 577,939,1083,958,980,z 603,846,1038,863,959,b
628,720,864,758,864,b 654,731,853,755,787,y 679,748,829,783,824,y 705,708,832,751,826,z
730,652,827,738,751,b 756,727,825,741,763,y 781,741,770,759,761,l`;

function Es15() {
  const s = scale(1440, 0, 2.613, 2.119);
  const t = scale(2000, 0, 2.825, 2.119);
  const dim = "#5a5854";
  return (
    <section className="relative min-h-0">
      <Chart box="1449 40 1106 688" label="ES 15 minute">
        <rect x="1573" y="62" width="520" height="561" fill="#233040" />
        <Area s={s} fill="#384a5e" pts="26,138 348,138 345,405 332,405 240,413 120,423 26,413" />
        <Area s={s} fill="#34465a" pts="350,150 380,158 410,156 445,168 480,192 520,212 600,213 650,208 800,204 920,203 1090,208 1115,192 1150,205 1230,220 1290,240 1330,260 1350,285 1430,318 1490,350 1568,385 1612,407 1691,413 1691,969 1612,965 1568,958 1520,945 1490,930 1455,900 1410,820 1375,765 1350,735 1335,680 1300,605 1275,570 1235,535 1160,490 1140,470 1125,410 1110,360 1090,335 900,325 800,335 650,350 560,362 530,375 505,378 480,350 440,270 400,232 350,200" />
        <rect x="1573" y="62" width="520" height="134" fill="#000" opacity="0.22" />
        <Zone x0={1450} x1={2483} y0={242} y1={258} left />
        <Zone x0={1450} x1={2483} y0={359} y1={384} fill="#363331" />
        <Area s={t} fill="#5a7a9a" opacity={0.25} pts="-270,516 246,516 246,544 -240,544" />
        <Area s={t} fill="#6a8098" opacity={0.25} pts="-170,765 246,765 246,811 -150,811" />

        <Line s={s} color="#3e5c80" pts="360,138 385,143 415,140 440,145 495,152 520,172 570,178 620,170 700,177 830,166 900,170 1000,175 1095,178 1120,140 1145,132 1165,138 1195,136 1240,143 1310,160 1375,175 1440,186 1490,203 1530,228 1568,240" />
        <Line s={t} color="#3e5c80" pts="0,198 20,202 80,233 140,246 165,253 215,273 248,274" />
        <Line s={s} color="#3e5c80" pts="44,506 120,512 170,505 332,497 345,400 358,245 375,232 400,235 440,290 495,420 520,418 570,400 720,375 860,362 930,357 1000,362 1070,360 1095,375 1115,430 1145,545 1200,590 1225,615 1250,630 1280,650 1320,720 1360,850 1400,905 1440,1000 1460,1045 1490,1080 1520,1097 1568,1105" />
        <Line s={t} color="#3e5c80" pts="40,1097 80,1102 150,1108 248,1111" />
        <Line s={s} color={TEAL} pts="34,595 138,598 190,588 300,581 348,578" />
        <Dashes s={s} color="#0a6060" data="556,145,582 582,141,608 608,138,660 686,145,712 712,139,765 765,134,900 900,137,1000 1000,140,1040 1040,147,1078 1078,145,1105 400,265,426 426,303,452 452,382,478 478,465,504 504,459,530 530,450,556 556,435,582 582,431,608 608,427,634 634,421,660 660,415,690 690,409,715 715,405,765 765,402,820 820,396,870 870,393,1000 1000,391,1075 1078,404,1103 1157,637,1183 1183,661,1210 1210,690,1236 1236,705,1262 1262,728,1288 1288,782,1314 1314,849,1340 1340,959,1366 1366,997,1393 1393,1058,1419 1419,1120,1445 1445,1185,1471 1471,1221,1497" />
        <Dashes s={t} color="#0a6060" data="206,134,263 37,1241,65 65,1245,93 93,1248,121 121,1250,206 206,1248,263" />
        <Level x0={1573} x1={2093} y={117} color="#70451c" h={2} />
        <Line s={s} color="#e0842a" w={2} pts="34,239 60,239 100,246 170,251 348,250" />
        <Dashes s={s} h={2} color="#a0682c" data="375,188,400 400,194,426 426,212,452 452,247,478 478,286,504 504,295,530 530,294,556 556,290,582 582,283,608 608,279,640 640,275,712 712,272,740 740,268,790 790,265,845 845,262,900 900,264,960 960,267,1050 1050,270,1078 1078,272,1105 1105,298,1131 1131,339,1157 1157,352,1183 1183,362,1210 1210,377,1236 1236,386,1262 1262,398,1288" />
        <Dashes s={s} h={2} color="#c07a30" data="1288,428,1314 1314,455,1340 1340,511,1366 1366,527,1393 1393,557,1419 1419,585,1445 1445,618,1471 1471,638,1497" />
        <Dashes s={t} h={2} color="#c07a30" data="37,655,65 65,665,93 93,672,121 121,676,150 150,680,178 178,686,206 206,690,263" />
        <Dotted x0={1933} x1={2022} y={292.5} color="#007000" dash="5 2" />
        <Dotted x0={1933} x1={2022} y={548.5} color="#007000" dash="5 2" />
        <rect x="1577" y="65" width="1" height="560" fill="#34465c" />
        <rect x="1577" y="639" width="1" height="64" fill="#34465c" />

        <Candles s={s} data={ES15_A} width={7} paired />
        <Candles s={t} data={ES15_B} width={7} paired />

        <DeltaBars s={s} edge={331} from={138} to={567} step={3} filler={40} seed={23} opacity={0.75}
          big="190,220,r 204,44,b 308,165,b 321,190,b 343,150,b 372,160,r 380,145,r 386,240,b 417,248,r 460,157,b 475,255,r 497,92,r 519,36,r 526,28,r 549,170,r 556,195,r" />
        <Line s={s} color={BLUE} pts="250,138 255,145 230,155 250,168 135,182 180,190 280,198" />
        <Line s={s} color="#707070" w={2} pts="280,198 195,202 62,234 180,238 245,255 228,262 225,295 110,325 120,335 195,340 26,350" />
        <Line s={s} color="#707070" w={2} pts="26,378 110,392 150,410 210,425 232,433 208,440 240,450 298,456" />
        <Line s={s} color={BLUE} pts="298,456 120,468 145,480 232,490 175,498 225,525 225,545 290,555 328,566" />

        <DeltaBars s={t} edge={1363} from={137} to={1158} step={3} filler={26} seed={29}
          big="204,1266,r 212,1310,r 248,1256,b 270,1290,r 285,1248,b 321,1264,r 380,1283,r 395,1265,r 483,1303,r 541,1235,b 585,1290,r 630,1262,r 644,1110,r 681,1236,r 688,1220,r 710,1272,r 768,1285,r 820,1238,r 835,1267,r 863,1213,r 870,1267,r 908,1170,b 914,1170,b 930,1258,r 965,1205,b 973,1188,r 981,1020,r 1010,1113,b 1048,1300,b 1069,1275,b 1106,1255,r 1113,1282,r 1127,1278,r" />
        <Line s={t} color={BLUE} pts="1355,138 1345,152 1348,165 1335,180 1210,190 1055,204 1045,210 1062,222 1195,235 1192,242 1020,257 1018,264 1030,272 1110,274 1185,279 1145,290 1158,297 1125,306 1165,310 1250,322 1210,337 1310,352 1280,375 1250,388 1315,402 1315,425 1345,445 1322,460 1335,480 1305,490 1328,502 1348,525" />
        <Line s={t} color="#707476" w={2} pts="1348,525 1250,545 1260,555 1305,565 1270,575 1280,593 1155,608 1205,615 1120,630 1078,645 1145,667 1210,687 1282,693 1255,703 1320,724 1295,735 1305,742 1228,746 1272,755 1235,768 1225,790 1250,800 1220,808 1240,820 1140,835 980,852 975,862 935,871" />
        <Line s={t} color={ORANGE} pts="935,871 1025,881" />
        <Line s={t} color="#707476" w={2} pts="1025,881 1022,887 1070,895 1073,908 1010,917 1110,930 1200,937 1130,946 1195,956 1052,966 1090,982 1170,992 1242,1003 1165,1012 1260,1026 1200,1040 1205,1052 1240,1062 1110,1076 1100,1085 1110,1094 1160,1100 1210,1122 1280,1134 1355,1155" />
        <Level x0={2091} x1={2483} y={394} color="#7c8480" />

        <Volume s={s} base={1478} data="46,1476,o 72,1476,o 98,1476,o 124,1476,o 150,1474,o 176,1472,o 202,1474,o 228,1476,o 254,1476,o 280,1476,o 307,1476,o 333,1476,o 359,1458 385,1466,o 411,1466,o 437,1464 463,1445 489,1420 515,1426 541,1447 567,1435 593,1448 619,1466,o 645,1466,o 671,1458,g 698,1441 724,1441 750,1443 776,1456 802,1454 828,1462,g 854,1456 880,1462,g 906,1460,g 933,1464,g 959,1426 985,1439 1011,1439 1037,1445 1063,1435 1090,1424 1116,1403 1142,1354 1168,1384 1194,1411 1220,1409 1246,1428 1273,1394 1299,1432 1325,1428 1351,1388 1377,1415 1403,1407 1429,1396 1455,1367 1482,1439 1508,1407 1534,1398 1560,1424" />
        <Volume s={t} base={1478} data="132,1437 160,1424 189,1386 217,1424 245,1471,o" />
        <Line s={s} color="#b0b4b8" pts="44,1467 60,1469 170,1471 335,1472 360,1457 400,1463 445,1463 500,1452 570,1448 610,1448 640,1452 1080,1452 1110,1448 1180,1444 1320,1441 1400,1436 1450,1431 1470,1433 1568,1431" />
        <Line s={t} color="#b0b4b8" pts="40,1431 180,1430 200,1428 248,1431" />

        <Label x={1468} y={77} color="#808488" size={13} font="DejaVu Sans Mono, monospace">15 m</Label>
        <Label x={1518} y={111} color="#94969a" size={16} weight={500}>6:46:56</Label>

        {Array.from({ length: 21 }, (_, i) => (
          <Label key={i} x={2489} y={Math.round(71 + i * 27.6)} color={dim} weight={500}>
            {(6916 - i * 4).toFixed(2)}
          </Label>
        ))}
        <rect x="2486" y="623" width="69" height="12" fill="#202c39" />
        <Label x={2489} y={666} color={dim} weight={500}>400.0</Label>
        <Label x={2489} y={699} color={dim} weight={500}>0.0</Label>
        <rect x="2486" y="702" width="40" height="6" fill="#202c39" />
        <Tag x={2489} y={56} w={21} bg="#666666">OH</Tag>
        <Tag x={2489} y={81} w={35} bg="#006a00">yVAH</Tag>
        <Tag x={2489} y={79} w={18} bg="#8a8600">yC</Tag>
        <Tag x={2489} y={164} w={35} bg="#ff9966">yPOC</Tag>
        <Tag x={2489} y={202} w={33} bg="#ff9090">yVAL</Tag>
        <Tag x={2489} y={195} w={18} bg="#ffffff">tO</Tag>
        <Tag x={2489} y={257} w={26} bg="#b05a5c">PDL</Tag>
        <Tag x={2489} y={387} w={46} bg="#d0332f" color="#ffffff">6869.00</Tag>
        <Tag x={2489} y={539} w={19} bg="#666666">OL</Tag>

        <Label x={1457} y={717} color={dim} weight={500} size={13}>2026-1-19</Label>
        {[["12:15", 1548], ["18:30", 1598], ["19:45", 1648], ["21:00", 1698], ["22:15", 1748], ["1-20", 1818], ["1:00", 1858], ["2:00", 1898], ["3:00", 1938], ["4:00", 1978], ["5:00", 2018], ["6:00", 2058], ["7:00", 2098], ["8:00", 2138], ["9:00", 2178], ["10:00", 2218], ["11:15", 2268], ["12:30", 2318], ["13:45", 2368], ["15:00", 2418], ["16:15", 2467]].map(([v, x]) => (
          <Label key={v} x={x} y={717} anchor="middle" color={dim} weight={500} size={13}>{v}</Label>
        ))}
        <Corner x={2520} y={705} w={23}>9 E</Corner>
      </Chart>
      <ChartTitle symbol="ESH6.CME" change="-1.54" rest="15 Min" className="left-1.5 top-2.5 text-[13px] font-medium" />
    </section>
  );
}

function Nq15() {
  const s = scale(1440, 720, 2.613, 2.337);
  const t = scale(2000, 720, 2.825, 2.337);
  const dim = "#5a5854";
  return (
    <section className="relative min-h-0">
      <Chart box="1449 728 1106 663" label="NQ 15 minute">
        <rect x="1453" y="746" width="234" height="539" fill="#233040" />
        <rect x="1813" y="746" width="468" height="539" fill="#233040" />
        <Area s={s} fill="#354659" pts="26,61 680,61 740,80 790,82 880,61 975,61 965,425 860,435 760,448 670,440 640,400 560,372 440,365 320,325 235,290 190,250 150,205 60,180 26,172" />
        <Area s={s} fill="#34465a" pts="975,75 985,80 1015,105 1080,110 1130,112 1180,105 1230,65 1240,61 1815,61 1842,75 1880,90 1954,108 2010,140 2055,157 2157,186 2185,187 2185,809 2148,808 2092,798 2037,780 2000,750 1968,700 1945,640 1907,570 1880,530 1852,460 1815,385 1778,365 1732,340 1695,300 1667,255 1644,205 1620,197 1463,199 1400,205 1320,215 1230,238 1160,255 1130,265 1100,240 1075,185 1040,170 985,185 970,300" />
        <Zone x0={1450} x1={2478} y0={876} y1={890} left />
        <Zone x0={1450} x1={2478} y0={1100} y1={1124} left />
        <Area s={s} fill="#6080a0" opacity={0.2} pts="1815,370 2185,370 2185,392 1820,392" />
        <Area s={s} fill="#6080a0" opacity={0.2} pts="645,370 975,370 975,392 645,392" />

        <Line s={s} color="#3e5c80" pts="46,234 130,236 160,255 190,310 235,372 340,410 400,440 440,450 560,460 635,480 655,520 685,542 800,540 850,535 900,517 965,511 975,400 990,193 1060,181 1080,240 1128,308 1190,290 1320,270 1420,250 1490,243 1568,241 1630,240" />
        <Line s={s} color="#3e5c80" pts="985,65 1015,96 1070,96 1100,78 1180,65" />
        <Line s={t} color="#3e5c80" pts="180,240 200,260 245,350 270,385 320,425 385,475 430,560 460,640 510,740 545,850 580,910 620,940 680,955 750,967 783,968" />
        <Dashes s={s} color="#0a6060" data="34,286,128 128,295,152 152,328,175 175,387,198 198,425,222 222,457,270 292,490,316 340,510,363 363,517,387 387,524,410 410,533,434 434,539,527 527,552,600 600,559,622 622,571,645 645,631,669 669,637,720 740,634,765 765,630,787 787,625,812 880,600,930 930,597,975 975,213,998 998,208,1045 1045,195,1068 1068,271,1092 1092,342,1115 1115,349,1139 1163,328,1186 1186,338,1210 1210,331,1257 1257,322,1330 1330,308,1400 1400,298,1450 1450,291,1520" />
        <Dashes s={t} color="#0a6060" data="0,293,60 60,288,130 130,282,184 184,290,209 209,363,234 234,429,260 260,459,285 285,487,311 311,510,336 336,529,362 362,545,387 387,606,412 412,651,438 438,751,463 463,793,489 489,856,514 514,943,540 540,1022,565 565,1069,590 590,1088,616 616,1099,641 641,1108,667 667,1113,720 720,1119,743 743,1122,794" />
        <Dashes s={s} h={2} color="#c07a30" data="34,77,110 110,85,152 152,94,175 175,111,198 198,123,222 222,134,245 245,144,292 292,150,316 316,155,363 363,164,410 410,175,457 457,181,505 505,187,550 550,195,598 598,200,622 622,210,645 645,233,669 669,248,692 692,252,716 716,258,740 740,263,765 765,266,850 850,262,905 905,256,950 950,252,975 975,133,998 998,140,1045 1045,137,1068 1068,158,1092 1092,189,1115 1115,188,1139 1139,184,1163 1163,178,1186 1186,163,1210 1210,155,1233 1233,148,1257 1257,140,1281 1281,134,1304 1304,128,1330 1330,121,1375 1375,114,1420 1420,112,1568" />
        <Dashes s={t} h={2} color="#c07a30" data="40,112,184 184,116,209 209,135,234 234,161,260 260,180,285 285,191,311 311,205,336 336,211,362 362,219,387 387,249,412 412,268,438 438,308,463 463,327,489 489,353,514 514,384,540 540,418,565 565,444,590 590,458,616 616,469,641 641,477,667 667,481,693 693,486,718 718,492,743 743,497,768 768,499,794" />
        <Dotted x0={1453} x1={1534} y={957.5} color="#005000" dash="5 2" />
        <Dotted x0={2137} x1={2218} y={915.5} color="#006000" dash="5 2" />
        <Dotted x0={2137} x1={2218} y={1184.5} color="#006000" dash="5 2" />

        <Candles s={s} data={NQ15_A} width={5} paired />
        <Candles s={t} data={NQ15_B} width={5} paired />
        <path d="M2096.5 966V955M2093 959L2096.5 955L2100 959M2114.5 971V960M2111 964L2114.5 960L2118 964" stroke="#0f0" strokeWidth="2" fill="none" />

        <DeltaBars s={s} edge={631} from={61} to={557} step={3} filler={44} seed={37} opacity={0.55}
          big="103,510,r 115,515,b 150,465,r 169,434,b 220,460,b 299,540,r 445,480,b 500,560,r" />
        <Line s={s} color="#686868" w={2} pts="210,70 195,80 90,92 330,98 365,105 335,115 360,130 270,148 255,162 410,185 465,208 420,222 530,240 480,258 410,270 420,282 350,292 390,310 320,330 400,345 395,355 520,367" />
        <Line s={s} color="#45658c" pts="520,367 380,375 285,390 320,400 300,420 235,440 280,462 360,480 470,495 430,502 520,515 600,530 625,553" />
        <DeltaBars s={s} edge={962} from={68} to={628} step={3} filler={50} seed={41} opacity={0.65}
          big="97,690,r 130,770,r 165,810,b 220,830,r 260,845,b 410,845,r 427,835,r 467,733,b 547,790,r 567,760,b 580,700,r 598,868,r 606,773,r 613,830,r" />
        <Line s={s} color={BLUE} pts="770,68 730,70 775,80 740,95 775,110 750,125 820,135 825,150" />
        <Line s={s} color="#686868" w={2} pts="825,150 540,155 430,168 550,172 720,178 785,190 760,200 870,225 800,245 670,272 780,295 750,310 500,320 455,340 455,355 560,370 700,388 790,410 840,430 850,445 895,462 870,480 795,490 845,497" />
        <Line s={s} color={BLUE} pts="845,497 885,510 840,525 850,540 735,560 730,570 815,585 855,590 810,595 930,610 958,628" />

        <DeltaBars s={t} edge={1347} from={61} to={1086} step={3} filler={36} seed={43} opacity={0.8}
          big="64,1157,r 103,1170,b 130,1192,r 169,1140,r 177,1060,r 204,1157,r 240,1195,b 272,1155,r 377,1200,b 450,1118,r 456,1150,b 477,1190,r 522,1180,r 540,1130,r 606,1210,b 677,1187,b 740,1190,r 762,1003,b 781,1165,r 802,1087,b 814,1125,r 821,1107,r 880,1180,r 968,1215,r 977,1172,b 1010,1205,b 1043,1200,r 1083,1285,r" />
        <Line s={t} color={BLUE} pts="1035,61 1028,66 1105,73 1100,80 905,98 840,110 920,123 860,130 970,143 918,150 1000,165 990,173 1150,183 1245,203" />
        <Line s={t} color="#707476" w={2} pts="1245,203 1215,213 1255,223 1185,240 1190,265 1245,280 1210,290 1308,300 1130,325 1308,347 1160,375 1150,385 1265,398 1200,410 1095,425 1105,435 1018,445 990,463 1040,475 1015,485 1160,503 1105,512 1228,545 1225,560 1175,575 1220,592 1240,602 1160,612 1228,635 1205,650 1235,660 1110,680 1165,692 1090,712 1125,718 1040,727 925,738 910,757 840,775 960,787 880,797 775,808" />
        <Line s={t} color={ORANGE} pts="790,810 880,818" />
        <Line s={t} color="#707476" w={2} pts="880,818 880,823 1055,830 1040,842 1160,860 1200,878 1300,890 1230,908 1275,925 1185,935 1180,947 1210,953 1105,965 1045,985 1105,993 1070,997 1105,1018 1190,1027 1225,1040 1250,1055 1310,1067 1338,1080" />
        <Level x0={2276} x1={2478} y={1045} color="#7c8480" />
        <Level x0={1450} x1={2281} y={805} color="#5e3c40" />
        <Level x0={2281} x1={2478} y={805} color="#4c4c4e" />
        <rect x="1457" y="732" width="1" height="626" fill="#4c5a4c" />

        <Volume s={s} base={1478} data="45,1453 68,1460,g 92,1468,o 115,1470,o 139,1460,g 162,1425 185,1425 209,1435 232,1425 256,1453 280,1446 303,1453 327,1455 350,1451 374,1451 397,1455 421,1463,g 444,1460,g 468,1457,g 491,1460,g 515,1465,o 538,1457 562,1463,g 586,1471,o 609,1463,g 633,1471,o 657,1475,o 680,1474,o 704,1474,o 728,1473,o 751,1474,o 775,1474,o 798,1470,o 822,1470,o 845,1471,o 869,1474,o 892,1472,o 916,1472,o 939,1475,o 963,1474,o 986,1455 1008,1448 1032,1463,g 1056,1465,o 1079,1448 1103,1425 1127,1428 1150,1440 1173,1428 1197,1423 1220,1458,g 1244,1463,g 1268,1455 1292,1450 1315,1445 1339,1448 1362,1452 1386,1442 1410,1450 1433,1452 1456,1455 1480,1455 1502,1463,g 1526,1430 1550,1438" />
        <Volume s={t} base={1478} data="118,1450 144,1447 170,1442 195,1425 220,1395 246,1386 271,1360 297,1410 322,1407 348,1418 373,1404 399,1416 424,1440 450,1404 475,1411 500,1414 525,1367 551,1358 577,1404 602,1414 628,1390 653,1410 679,1440 704,1430 729,1410 755,1430 779,1475,o" />
        <Line s={s} color="#b0b4b8" pts="44,1457 270,1457 275,1454 410,1454 415,1456 620,1457 680,1466 780,1469 965,1471 988,1452 1010,1449 1050,1455 1090,1457 1110,1450 1170,1446 1240,1446 1568,1450 1635,1450" />
        <Line s={t} color="#b0b4b8" pts="185,1450 190,1447 310,1441 420,1438 520,1433 575,1431 783,1431" />

        <Label x={1467} y={760} color="#707478" size={13} font="DejaVu Sans Mono, monospace">15 m</Label>

        {Array.from({ length: 19 }, (_, i) => (
          <Label key={i} x={2483} y={Math.round(761 + i * 27.9)} color={dim} weight={500}>
            {(25400 - i * 20).toFixed(2)}
          </Label>
        ))}
        <Label x={2483} y={1322} color={dim} weight={500}>400.0</Label>
        <Label x={2483} y={1353} color={dim} weight={500}>0.0</Label>
        <rect x="2480" y="1355" width="40" height="6" fill="#202c39" />
        <Tag x={2483} y={752} w={18} bg="#8a8600">yC</Tag>
        <Tag x={2483} y={780} w={35} bg="#ff9966">yPOC</Tag>
        <Tag x={2483} y={775} w={35} bg="#006a00">yVAH</Tag>
        <Tag x={2483} y={796} w={53} bg="#666666" color="#050505">25367.00</Tag>
        <Tag x={2483} y={902} w={18} bg="#ffffff">tO</Tag>
        <Tag x={2483} y={920} w={33} bg="#ff9090">yVAL</Tag>
        <Tag x={2483} y={978} w={26} bg="#b05a5c">PDL</Tag>
        <Tag x={2483} y={1038} w={54} bg="#087ab4" color="#ffffff">25195.00</Tag>
        <Tag x={2483} y={1175} w={19} bg="#666666">OL</Tag>

        <Tag x={1449} y={1363} w={80} h={15} bg="#666666" color="#050505" size={13} anchor="middle">-01-19  03:00</Tag>
        {[["5:30", 1548], ["6:30", 1584], ["7:30", 1620], ["8:30", 1656], ["9:30", 1692], ["10:45", 1737], ["12:00", 1782], ["18:15", 1827], ["19:30", 1872], ["20:45", 1916], ["22:00", 1961], ["1-20", 2034], ["1:15", 2079], ["2:30", 2123], ["3:30", 2159], ["4:30", 2196], ["5:30", 2232], ["6:30", 2268], ["7:30", 2304], ["8:30", 2340], ["9:30", 2376], ["10:45", 2421], ["12:00", 2466]].map(([v, x]) => (
          <Label key={x} x={x} y={1371} anchor="middle" color={dim} weight={500} size={13}>{v}</Label>
        ))}
        <Corner x={2520} y={1359} w={23}>8 E</Corner>
        <Level x0={1449} x1={2555} y={1389} color="#3a3d42" />
      </Chart>
      <ChartTitle symbol="NQH6.CME" change="-1.92" rest="15 Min" className="left-1.5 top-1.5 text-[13px] font-medium" />
    </section>
  );
}

// ---------- floating windows ----------

const TICKER = [
  ["BTCF6.CME", "91375", "-4.48%"],
  ["VIX_CGI", "20.11", "6.74%"],
  null,
  ["ESH6.CME", "6869.00", "-1.54%"],
  ["NQH6.CME", "25195.75", "-1.92%"],
  ["YMH6.CBOT", "48889", "-1.33%"],
  ["RTYH6.CME", "2643.3", "-1.78%"],
  null,
  ["TSLA", "426.30", "-2.56%"],
  ["NVDA", "181.67", "-2.45%"],
  ["AAPL", "252.47", "-1.20%"],
  ["AMZN", "232.24", "-2.88%"],
  null,
  ["USDX", "98.4307", "-0.62%"],
  ["6EH6.CME", "1.17665", "1.20%"],
  null,
  ["CLH6.NYMEX", "59.60", "0.44%"],
  ["GCG6.COMEX", "4737.6", "3.09%"],
  ["", "", ""],
];

function LiveTicker() {
  return (
    <div className="absolute left-[184px] top-[539px] w-[233px] overflow-hidden rounded-lg border border-[#b8b8b8] bg-white pb-0.5 font-['Open_Sans',sans-serif] text-[11px] text-[#606060] shadow-[0_8px_24px_rgba(0,0,0,0.4)]">
      <header className="flex h-[30px] items-center bg-[#f3f3f3] pl-2">
        <svg width="15" height="13" viewBox="0 0 15 13" shapeRendering="crispEdges">
          <rect width="15" height="13" fill="#a8b4bc" />
          <rect x="1" y="2" width="13" height="10" fill="#f4f8fa" />
          <rect x="2" y="3" width="5" height="8" fill="#2c8070" />
          <rect x="2" y="3" width="2" height="8" fill="#3870a8" />
          <rect x="9" y="3" width="1" height="8" fill="#c8d0d4" />
        </svg>
        <h2 className="ml-1.5 grow text-[#808080]">Live Ticker</h2>
        <button aria-label="Minimize" className="w-[45px]">
          <svg width="10" height="10" className="mx-auto" stroke="#808080"><path d="M0 5.5H10" /></svg>
        </button>
        <button aria-label="Maximize" className="w-[45px]">
          <svg width="10" height="10" className="mx-auto" stroke="#808080" fill="none"><rect x="0.5" y="0.5" width="9" height="9" rx="1" /></svg>
        </button>
        <button aria-label="Close" className="w-[46px]">
          <svg width="10" height="10" className="mx-auto" stroke="#808080"><path d="M0 0L10 10M10 0L0 10" /></svg>
        </button>
      </header>
      <nav className="flex h-5 items-center gap-3.5 pl-1.5">
        {["File", "Settings", "Alerts", "Symbols"].map((m) => (
          <button key={m}>{m}</button>
        ))}
      </nav>
      <table className="w-full table-fixed border-collapse border-t border-[#909090] bg-[#202c39] text-center leading-none text-white">
        <colgroup>
          <col className="w-[77px]" />
          <col className="w-[70px]" />
          <col />
        </colgroup>
        <thead>
          <tr className="h-[25px] bg-[#a8d4ff] text-left text-black">
            <th className="border border-white border-r-[#606060] pl-1 font-normal">Symbol</th>
            <th className="border border-white border-r-[#606060] pl-1 font-normal">Last</th>
            <th className="border border-white pl-1 font-normal">Day %</th>
          </tr>
        </thead>
        <tbody>
          {TICKER.map((row, i) =>
            row ? (
              <tr key={i} className="h-[17px]">
                <td className={"whitespace-nowrap border border-white p-0 " + (i === 0 ? "bg-[#a86c00]" : "")}>{row[0]}</td>
                <td className="border border-white p-0">{row[1]}</td>
                <td className={"border border-white p-0 " + (row[2].startsWith("-") ? "text-[#ff9090]" : "text-[#00f020]")}>
                  {row[2]}
                </td>
              </tr>
            ) : (
              <tr key={i} className="h-[17px]">
                <td colSpan={3} className="border border-white bg-black p-0" />
              </tr>
            )
          )}
        </tbody>
      </table>
    </div>
  );
}

const WINDOWS = [
  "ES 1 Min --- ESH6.CME [CB]  1 Min  #1 | E-MINI S&P 500 FUTURES ES Mar 2026 (Mar26)",
  "ES 5 Min --- ESH6.CME/MESH6.CME [CB]  5 Min  #2 | E-MINI S&P 500 FUTURES ES Mar 2026 (Mar26)",
  "ES 15 Min --- ESH6.CME [CB]  15 Min  #3 | E-MINI S&P 500 FUTURES ES Mar 2026 (Mar26)",
  "NQ 1 Min --- NQH6.CME/MNQH6.CME [CB]  1 Min  #4 | E-MINI NASDAQ 100 FUTURES NQ Mar 2026 (Mar26)",
  "NQ 5 Min --- NQH6.CME/MNQH6.CME [CB]  5 Min  #5 | E-MINI NASDAQ 100 FUTURES NQ Mar 2026 (Mar26)",
  "NQ 15 Min --- NQH6.CME [CB]  15 Min  #6 | E-MINI NASDAQ 100 FUTURES NQ Mar 2026 (Mar26)",
  "ES MONTH 120m ESH6.CME [CB]  120 Min  #12 | E-MINI S&P 500 FUTURES ES Mar 2026 (Mar26)",
  "ES QUARTER 8h ESH6.CME [CB]  480 Min  #13 | E-MINI S&P 500 FUTURES ES Mar 2026 (Mar26)",
  "NQ MONTH 120m NQH6.CME [CB]  120 Min  #16 | E-MINI NASDAQ 100 FUTURES NQ Mar 2026 (Mar26)",
  "NQ QUARTER 8h NQH6.CME [CB]  480 Min  #17 | E-MINI NASDAQ 100 FUTURES NQ Mar 2026 (Mar26)",
  "TPO ES --- ESH6.CME [CB] #7 | E-MINI S&P 500 FUTURES ES Mar 2026 (Mar26)",
  "TPO ES --- Weekly ESH6.CME [CB] #8 | E-MINI S&P 500 FUTURES ES Mar 2026 (Mar26)",
  "TPO NQ --- NQH6.CME [CB] #9 | E-MINI NASDAQ 100 FUTURES NQ Mar 2026 (Mar26) (NQH6.CME)",
  "TPO NQ --- Weekly NQH6.CME [CB] #10 | E-MINI NASDAQ 100 FUTURES NQ Mar 2026 (Mar26)",
  "30s NQ ATR NQH6.CME  30 Sec  #20 | E-MINI NASDAQ 100 FUTURES NQ Mar 2026 (Mar26)",
];

function DialogButton({ children, className = "w-[100px]", disabled }) {
  return (
    <button
      disabled={disabled}
      className={
        "h-7 border border-b-[#606060] border-l-white border-r-[#606060] border-t-white bg-[#f0f0f0] text-black shadow-[inset_-1px_-1px_0_#a0a0a0,inset_1px_1px_0_#e3e3e3] disabled:text-[#a8a8a8] " +
        className
      }
    >
      {children}
    </button>
  );
}

function ChartbooksDialog() {
  const [selected, setSelected] = useState(0);
  const [book, setBook] = useState("ES_NQ_beta.Cht");

  return (
    <div
      role="dialog"
      aria-labelledby="dialogTitle"
      className="absolute left-[445px] top-[200px] flex h-[489px] w-[640px] flex-col rounded-lg border border-[#707478] bg-[#f0f0f0] font-['Liberation_Sans',sans-serif] text-[13px] leading-4 text-black shadow-[0_16px_40px_rgba(0,0,0,0.5)]"
    >
      <header className="flex h-[30px] items-center justify-between rounded-t-lg bg-[#f3f3f3] pl-2 pr-2.5 font-['Open_Sans',sans-serif] text-[11px]">
        <h2 id="dialogTitle">Windows and Chartbooks</h2>
        <button aria-label="Close dialog">
          <svg width="10" height="10" stroke="#202020"><path d="M0 0L10 10M10 0L0 10" /></svg>
        </button>
      </header>

      <div className="pl-[13px] pr-[14px]">
        <label htmlFor="chartbook" className="block pt-[13px]">Chartbook:</label>
        <div className="relative h-[23px] border border-[#e3e3e3] border-l-[#808080] border-t-[#808080] bg-white shadow-[inset_1px_1px_0_#606060]">
          <select
            id="chartbook"
            value={book}
            onChange={(e) => setBook(e.target.value)}
            className="h-full w-full appearance-none bg-transparent pl-[3px] outline-none"
          >
            <option>ES_NQ_beta.Cht</option>
          </select>
          <span className="pointer-events-none absolute bottom-px right-px top-0.5 flex w-4 items-center justify-center border border-b-[#606060] border-l-white border-r-[#606060] border-t-white bg-[#f0f0f0]">
            <svg width="7" height="4"><path d="M0 0H7L3.5 4Z" /></svg>
          </span>
        </div>

        <p id="windowsLabel" className="pt-3.5">Windows:</p>
        <div className="flex h-[245px] border border-[#e3e3e3] border-l-[#808080] border-t-[#808080] bg-white pl-px pt-px shadow-[inset_1px_1px_0_#606060]">
          <ul role="listbox" aria-labelledby="windowsLabel" className="min-w-0 grow overflow-hidden">
            {WINDOWS.map((name, i) => (
              <li
                key={name}
                role="option"
                aria-selected={i === selected}
                onClick={() => setSelected(i)}
                className={
                  "h-4 overflow-hidden whitespace-pre pl-0.5 " +
                  (i === selected ? "bg-[#0078d7] text-white outline-dotted outline-1 -outline-offset-1 outline-[#ff8728]" : "")
                }
              >
                {name}
              </li>
            ))}
          </ul>
          <div className="w-[17px] shrink-0 bg-[#f0f0f0] pl-[7px] pt-[18px]">
            <div className="h-[164px] w-0.5 rounded bg-[#808080]" />
          </div>
        </div>
      </div>

      <div className="flex pl-[13px] pt-1">
        <fieldset className="h-[67px] w-[247px] border border-[#a0a0a0] pl-[15px]">
          <legend className="-ml-2 px-0.5">Window/Tab Ordering</legend>
          <div className="flex gap-3 pt-2">
            <DialogButton disabled>Move Up</DialogButton>
            <DialogButton>Move Down</DialogButton>
          </div>
        </fieldset>
        <div className="flex gap-2 pl-[23px] pt-6">
          <DialogButton>Attach/Detach</DialogButton>
          <DialogButton className="w-[132px]">Move to On Screen</DialogButton>
          <DialogButton>Activate</DialogButton>
        </div>
      </div>

      <div className="flex gap-3 pl-[165px] pt-4">
        <DialogButton className="w-[100px] outline outline-1 -outline-offset-1 outline-[#606060]">OK</DialogButton>
        <DialogButton>Cancel</DialogButton>
      </div>
    </div>
  );
}

// ---------- main window ----------

const MENU = ["File", "Edit", "Chart", "Analysis", "Tools", "Spreadsheet", "Trade", "Global Settings", "Window", "CB", "CW", "Help"];

function TitleBar() {
  return (
    <header className="flex h-5 shrink-0 items-center bg-[#f3f3f3] font-['Roboto',sans-serif] text-[12px] text-[#8c8c8c]">
      <svg width="13" height="16" viewBox="0 0 13 16">
        <circle cx="4" cy="8" r="7.5" fill="#3c8ac8" />
        <path d="M0 2C5 0 10 4 10 8C7 9 8 12 5 15L0 15Z" fill="#58a838" />
        <path d="M1 3C4 4 5 6 4 9L0 9Z" fill="#e0e050" />
      </svg>
      <h1 className="ml-1.5 grow whitespace-pre">
        Sierra Chart #2 2866 ES_NQ_beta DTC - Sub Instance 2026-01-20  13:46:55 Tue DF:30986  ST:26, 26 [TPO ES --- ESH6.CME [CB] #7 | E-MINI S&amp;P 500 FUTURES ES Mar 2026 (Mar26)]
      </h1>
      <button aria-label="Minimize window" className="w-[45px]">
        <svg width="10" height="10" className="mx-auto" stroke="#808080"><path d="M0 5.5H10" /></svg>
      </button>
      <button aria-label="Restore window" className="w-[45px]">
        <svg width="10" height="10" className="mx-auto" stroke="#808080" fill="none">
          <rect x="0.5" y="2.5" width="7" height="7" rx="1" />
          <path d="M2.5 0.5H8Q9.5 0.5 9.5 2V7.5" />
        </svg>
      </button>
      <button aria-label="Close window" className="w-[48px]">
        <svg width="10" height="10" className="mx-auto" stroke="#808080"><path d="M0 0L10 10M10 0L0 10" /></svg>
      </button>
    </header>
  );
}

export default function App() {
  return (
    <div className="relative flex h-screen flex-col overflow-hidden bg-[#202c39]">
      <TitleBar />
      <nav className="flex h-5 shrink-0 items-center gap-3.5 border-b border-[#d8d8d8] bg-white pl-[3px] font-['Open_Sans',sans-serif] text-[11px] text-[#606060]">
        {MENU.map((item) => (
          <button key={item}>{item}</button>
        ))}
      </nav>

      <main className="grid min-h-0 grow grid-cols-[411fr_1038fr_1106fr] grid-rows-[minmax(0,1fr)]">
        <div className="flex min-h-0 min-w-0 flex-col">
          <div className="grid min-h-0 flex-[691] grid-cols-[191fr_220fr] grid-rows-[minmax(0,1fr)]">
            <EsDaily />
            <Es480 />
          </div>
          <ToolBar />
          <div className="grid min-h-0 flex-[629] grid-cols-[191fr_220fr] grid-rows-[minmax(0,1fr)]">
            <NqDaily />
            <Nq480 />
          </div>
        </div>
        <div className="grid min-h-0 min-w-0 grid-rows-[minmax(0,692fr)_minmax(0,659fr)]">
          <EsProfile />
          <NqProfile />
        </div>
        <div className="grid min-h-0 min-w-0 grid-rows-[minmax(0,688fr)_minmax(0,663fr)]">
          <Es15 />
          <Nq15 />
        </div>
      </main>

      <LiveTicker />
      <ChartbooksDialog />
    </div>
  );
}
